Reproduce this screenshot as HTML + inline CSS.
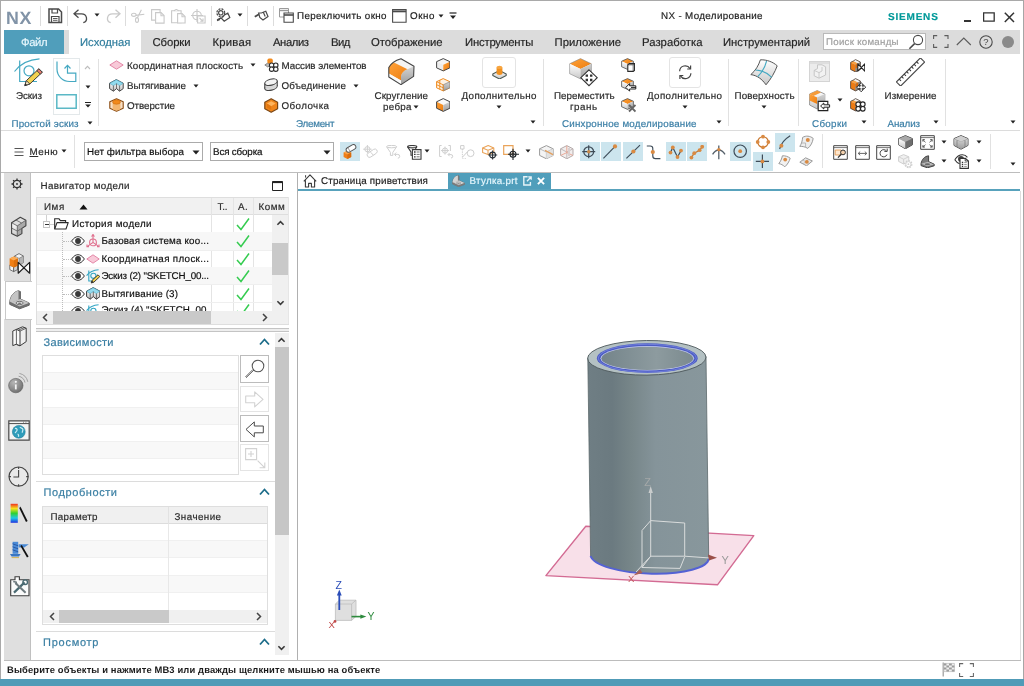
<!DOCTYPE html>
<html lang="ru"><head><meta charset="utf-8"><title>NX - Моделирование</title><style>
html,body{margin:0;padding:0;}
body{width:1024px;height:686px;overflow:hidden;background:#fff;position:relative;font-family:"Liberation Sans", sans-serif;}
#app{position:absolute;left:0;top:0;width:1024px;height:686px;will-change:transform;}
.a{position:absolute;display:block;}
.t{position:absolute;white-space:nowrap;line-height:16px;height:16px;transform-origin:0 50%;text-rendering:geometricPrecision;-webkit-text-stroke:0.18px currentColor;font-family:"Liberation Sans", sans-serif;}
</style></head><body>
<div id="app">
<div class="a" style="left:0px;top:0px;width:1024px;height:686px;background:#fff;"></div>
<div class="a" style="left:0px;top:0px;width:1024px;height:1px;background:#a9a9a9;"></div>
<div class="a" style="left:0px;top:0px;width:1px;height:686px;background:#a9a9a9;"></div>
<div class="a" style="left:1023px;top:0px;width:1px;height:686px;background:#a6a6a6;"></div>
<span class="t" style="letter-spacing:0.55px;left:6px;top:8.4px;font-size:17.8px;color:#8193a7;font-weight:700;line-height:20px;height:20px;-webkit-text-stroke:0;">NX</span>
<div class="a" style="left:40px;top:6px;width:1px;height:20px;background:#dcdcdc;"></div>
<div class="a" style="left:67px;top:6px;width:1px;height:20px;background:#dcdcdc;"></div>
<div class="a" style="left:125px;top:6px;width:1px;height:20px;background:#dcdcdc;"></div>
<div class="a" style="left:211px;top:6px;width:1px;height:20px;background:#dcdcdc;"></div>
<div class="a" style="left:247px;top:6px;width:1px;height:20px;background:#dcdcdc;"></div>
<div class="a" style="left:273px;top:6px;width:1px;height:20px;background:#dcdcdc;"></div>
<span class="t" style="letter-spacing:0.36px;left:297px;top:8.8px;font-size:9.8px;color:#1e1e1e;">Переключить окно</span>
<span class="t" style="letter-spacing:0.55px;left:410px;top:8.8px;font-size:9.8px;color:#1e1e1e;">Окно</span>
<svg class="a" style="left:438.0px;top:13.5px;" width="6" height="4" viewBox="0 0 6 4"><path d="M0.5 0.5h5l-2.5 3z" fill="#222"/></svg>
<span class="t" style="letter-spacing:0.35px;left:661px;top:8.8px;font-size:9.8px;color:#1e1e1e;">NX - Моделирование</span>
<span class="t" style="letter-spacing:0.8px;left:888px;top:10.3px;font-size:10px;color:#099;font-weight:700;">SIEMENS</span>
<div class="a" style="left:4px;top:30px;width:1016px;height:24px;background:#dcdcdc;"></div>
<div class="a" style="left:4px;top:30px;width:60px;height:24px;background:#509ebb;"></div>
<div class="a" style="left:68.5px;top:30px;width:72px;height:24px;background:#fff;"></div>
<span class="t" style="letter-spacing:-0.43px;left:21px;top:34.8px;font-size:11.3px;color:#e6f7fd;">Файл</span>
<span class="t" style="letter-spacing:-0.01px;left:80px;top:34.8px;font-size:11.3px;color:#2f7d9d;">Исходная</span>
<span class="t" style="letter-spacing:-0.09px;left:152.5px;top:34.8px;font-size:11.3px;color:#262626;">Сборки</span>
<span class="t" style="letter-spacing:0.21px;left:212.5px;top:34.8px;font-size:11.3px;color:#262626;">Кривая</span>
<span class="t" style="letter-spacing:-0.43px;left:273px;top:34.8px;font-size:11.3px;color:#262626;">Анализ</span>
<span class="t" style="letter-spacing:-0.5px;left:331px;top:34.8px;font-size:11.3px;color:#262626;">Вид</span>
<span class="t" style="letter-spacing:-0.03px;left:371px;top:34.8px;font-size:11.3px;color:#262626;">Отображение</span>
<span class="t" style="letter-spacing:-0.2px;left:465px;top:34.8px;font-size:11.3px;color:#262626;">Инструменты</span>
<span class="t" style="letter-spacing:0.03px;left:554.5px;top:34.8px;font-size:11.3px;color:#262626;">Приложение</span>
<span class="t" style="letter-spacing:0.03px;left:642px;top:34.8px;font-size:11.3px;color:#262626;">Разработка</span>
<span class="t" style="letter-spacing:-0.03px;left:723px;top:34.8px;font-size:11.3px;color:#262626;">Инструментарий</span>
<div class="a" style="left:823px;top:33px;width:103px;height:17px;background:#fff;border:1px solid #b9b9b9;box-sizing:border-box;"></div>
<span class="t" style="letter-spacing:0.27px;left:826px;top:34.8px;font-size:9.7px;color:#a0a0a0;">Поиск команды</span>
<div class="a" style="left:1002px;top:35.5px;width:12px;height:12px;background:#8a8a8a;border-radius:6px;"></div>
<div class="a" style="left:1px;top:130px;width:1019px;height:1px;background:#dcdcdc;"></div>
<div class="a" style="left:98px;top:59px;width:1px;height:67px;background:#e1e1e1;"></div>
<div class="a" style="left:543px;top:59px;width:1px;height:67px;background:#e1e1e1;"></div>
<div class="a" style="left:728px;top:59px;width:1px;height:67px;background:#e1e1e1;"></div>
<div class="a" style="left:798px;top:59px;width:1px;height:67px;background:#e1e1e1;"></div>
<div class="a" style="left:873px;top:59px;width:1px;height:67px;background:#e1e1e1;"></div>
<div class="a" style="left:945px;top:59px;width:1px;height:67px;background:#e1e1e1;"></div>
<span class="t" style="letter-spacing:-0.05px;left:16px;top:88.8px;font-size:9.8px;color:#2b2b2b;">Эскиз</span>
<div class="a" style="left:53px;top:58px;width:27px;height:57px;border:1px solid #e3e8ea;box-sizing:border-box;"></div>
<span class="t" style="letter-spacing:0.17px;left:11.5px;top:117.3px;font-size:9.8px;color:#3b7fa6;">Простой эскиз</span>
<svg class="a" style="left:86.5px;top:120.5px;" width="6" height="4" viewBox="0 0 6 4"><path d="M0.5 0.5h5l-2.5 3z" fill="#222"/></svg>
<svg class="a" style="left:84.5px;top:84.5px;" width="6" height="4" viewBox="0 0 6 4"><path d="M0.5 0.5h5l-2.5 3z" fill="#222"/></svg>
<svg class="a" style="left:84px;top:65px;" width="7" height="5" viewBox="0 0 7 5"><path d="M1 4l2.5-2.6 2.5 2.6" fill="none" stroke="#bdbdbd" stroke-width="1.1"/></svg>
<svg class="a" style="left:84.5px;top:102px;" width="6" height="6" viewBox="0 0 6 6"><path d="M0 0.5h6" stroke="#222" stroke-width="1"/><path d="M0.2 2.6h5.6l-2.8 3z" fill="#222"/></svg>
<span class="t" style="letter-spacing:0.15px;left:127px;top:58.8px;font-size:9.8px;color:#2b2b2b;">Координатная плоскость</span>
<svg class="a" style="left:249.5px;top:63.0px;" width="6" height="4" viewBox="0 0 6 4"><path d="M0.5 0.5h5l-2.5 3z" fill="#222"/></svg>
<span class="t" style="letter-spacing:-0.03px;left:127px;top:79.3px;font-size:9.8px;color:#2b2b2b;">Вытягивание</span>
<svg class="a" style="left:192.5px;top:84.0px;" width="6" height="4" viewBox="0 0 6 4"><path d="M0.5 0.5h5l-2.5 3z" fill="#222"/></svg>
<span class="t" style="letter-spacing:-0.05px;left:127px;top:99.3px;font-size:9.8px;color:#2b2b2b;">Отверстие</span>
<span class="t" style="letter-spacing:-0.03px;left:281.5px;top:58.8px;font-size:9.8px;color:#2b2b2b;">Массив элементов</span>
<span class="t" style="letter-spacing:0.18px;left:281.5px;top:79.3px;font-size:9.8px;color:#2b2b2b;">Объединение</span>
<svg class="a" style="left:353.0px;top:84.0px;" width="6" height="4" viewBox="0 0 6 4"><path d="M0.5 0.5h5l-2.5 3z" fill="#222"/></svg>
<span class="t" style="letter-spacing:0.42px;left:281.5px;top:99.3px;font-size:9.8px;color:#2b2b2b;">Оболочка</span>
<span class="t" style="letter-spacing:-0.24px;left:296px;top:117.3px;font-size:9.8px;color:#3b7fa6;">Элемент</span>
<span class="t" style="letter-spacing:0.12px;left:374.5px;top:88.8px;font-size:9.8px;color:#2b2b2b;">Скругление</span>
<span class="t" style="letter-spacing:0.3px;left:383px;top:100.3px;font-size:9.8px;color:#2b2b2b;">ребра</span>
<svg class="a" style="left:413.0px;top:105.0px;" width="6" height="4" viewBox="0 0 6 4"><path d="M0.5 0.5h5l-2.5 3z" fill="#222"/></svg>
<div class="a" style="left:482px;top:57px;width:34px;height:31px;border:1px solid #e4e4e4;box-sizing:border-box;border-radius:3px;"></div>
<span class="t" style="letter-spacing:0.37px;left:461.5px;top:88.8px;font-size:9.8px;color:#2b2b2b;">Дополнительно</span>
<svg class="a" style="left:496.0px;top:104.5px;" width="6" height="4" viewBox="0 0 6 4"><path d="M0.5 0.5h5l-2.5 3z" fill="#222"/></svg>
<svg class="a" style="left:530.0px;top:120.0px;" width="6" height="4" viewBox="0 0 6 4"><path d="M0.5 0.5h5l-2.5 3z" fill="#222"/></svg>
<span class="t" style="letter-spacing:0.05px;left:554px;top:88.8px;font-size:9.8px;color:#2b2b2b;">Переместить</span>
<span class="t" style="letter-spacing:0.55px;left:570px;top:100.3px;font-size:9.8px;color:#2b2b2b;">грань</span>
<div class="a" style="left:669px;top:57px;width:32px;height:31px;border:1px solid #e4e4e4;box-sizing:border-box;border-radius:3px;"></div>
<span class="t" style="letter-spacing:0.37px;left:647px;top:88.8px;font-size:9.8px;color:#2b2b2b;">Дополнительно</span>
<svg class="a" style="left:682.0px;top:104.5px;" width="6" height="4" viewBox="0 0 6 4"><path d="M0.5 0.5h5l-2.5 3z" fill="#222"/></svg>
<span class="t" style="letter-spacing:0.2px;left:562px;top:117.3px;font-size:9.8px;color:#3b7fa6;">Синхронное моделирование</span>
<svg class="a" style="left:716.0px;top:119.5px;" width="6" height="4" viewBox="0 0 6 4"><path d="M0.5 0.5h5l-2.5 3z" fill="#222"/></svg>
<span class="t" style="letter-spacing:0.14px;left:734.5px;top:88.8px;font-size:9.8px;color:#2b2b2b;">Поверхность</span>
<svg class="a" style="left:761.0px;top:104.5px;" width="6" height="4" viewBox="0 0 6 4"><path d="M0.5 0.5h5l-2.5 3z" fill="#222"/></svg>
<div class="a" style="left:809px;top:60.5px;width:21px;height:21px;background:#ececec;border:1px solid #d4d4d4;box-sizing:border-box;"></div>
<svg class="a" style="left:836.5px;top:98.0px;" width="6" height="4" viewBox="0 0 6 4"><path d="M0.5 0.5h5l-2.5 3z" fill="#222"/></svg>
<span class="t" style="letter-spacing:0.33px;left:812px;top:117.3px;font-size:9.8px;color:#3b7fa6;">Сборки</span>
<svg class="a" style="left:860.5px;top:120.0px;" width="6" height="4" viewBox="0 0 6 4"><path d="M0.5 0.5h5l-2.5 3z" fill="#222"/></svg>
<span class="t" style="letter-spacing:0.13px;left:884.5px;top:88.8px;font-size:9.8px;color:#2b2b2b;">Измерение</span>
<span class="t" style="letter-spacing:-0.12px;left:887.5px;top:117.3px;font-size:9.8px;color:#3b7fa6;">Анализ</span>
<svg class="a" style="left:933.0px;top:120.0px;" width="6" height="4" viewBox="0 0 6 4"><path d="M0.5 0.5h5l-2.5 3z" fill="#222"/></svg>
<svg class="a" style="left:1010.0px;top:120.0px;" width="6" height="4" viewBox="0 0 6 4"><path d="M0.5 0.5h5l-2.5 3z" fill="#222"/></svg>
<div class="a" style="left:1px;top:172px;width:1019px;height:1px;background:#bdbdbd;"></div>
<span class="t" style="letter-spacing:0.5px;left:29.5px;top:144.8px;font-size:9.8px;color:#2b2b2b;"><u>М</u>еню</span>
<svg class="a" style="left:60.5px;top:149.0px;" width="6" height="4" viewBox="0 0 6 4"><path d="M0.5 0.5h5l-2.5 3z" fill="#222"/></svg>
<svg class="a" style="left:14px;top:147px;" width="10" height="10" viewBox="0 0 10 10"><path d="M0.5 1.5h9M0.5 5h9M0.5 8.5h9" stroke="#555" stroke-width="1"/></svg>
<div class="a" style="left:74px;top:135px;width:1px;height:33px;background:#e1e1e1;"></div>
<div class="a" style="left:84px;top:142px;width:119px;height:19px;background:#fff;border:1px solid #ababab;box-sizing:border-box;"></div>
<span class="t" style="letter-spacing:0.1px;left:87px;top:144.8px;font-size:9.8px;color:#111;">Нет фильтра выбора</span>
<svg class="a" style="left:191.5px;top:149.5px;" width="8" height="5" viewBox="0 0 8 5"><path d="M0.5 0.5h7l-3.5 4z" fill="#222"/></svg>
<div class="a" style="left:210px;top:142px;width:124px;height:19px;background:#fff;border:1px solid #ababab;box-sizing:border-box;"></div>
<span class="t" style="letter-spacing:-0.15px;left:213px;top:144.8px;font-size:9.8px;color:#111;">Вся сборка</span>
<svg class="a" style="left:322.5px;top:149.5px;" width="8" height="5" viewBox="0 0 8 5"><path d="M0.5 0.5h7l-3.5 4z" fill="#222"/></svg>
<div class="a" style="left:340px;top:142px;width:20px;height:19px;background:#cce5ee;"></div>
<div class="a" style="left:580px;top:142px;width:19.5px;height:19px;background:#cce5ee;"></div>
<div class="a" style="left:601px;top:142px;width:19.5px;height:19px;background:#cce5ee;"></div>
<div class="a" style="left:623px;top:142px;width:19.5px;height:19px;background:#cce5ee;"></div>
<div class="a" style="left:666px;top:142px;width:20px;height:19px;background:#cce5ee;"></div>
<div class="a" style="left:687px;top:142px;width:20px;height:19px;background:#cce5ee;"></div>
<div class="a" style="left:730px;top:142px;width:21px;height:19px;background:#cce5ee;"></div>
<div class="a" style="left:753px;top:152px;width:20px;height:19px;background:#cce5ee;"></div>
<div class="a" style="left:775px;top:133px;width:20px;height:19px;background:#cce5ee;"></div>
<div class="a" style="left:822px;top:134px;width:1px;height:34px;background:#e1e1e1;"></div>
<div class="a" style="left:990px;top:134px;width:1px;height:35px;background:#e1e1e1;"></div>
<svg class="a" style="left:424.0px;top:148.5px;" width="6" height="4" viewBox="0 0 6 4"><path d="M0.5 0.5h5l-2.5 3z" fill="#222"/></svg>
<svg class="a" style="left:524.5px;top:148.5px;" width="6" height="4" viewBox="0 0 6 4"><path d="M0.5 0.5h5l-2.5 3z" fill="#222"/></svg>
<svg class="a" style="left:940.5px;top:139.5px;" width="6" height="4" viewBox="0 0 6 4"><path d="M0.5 0.5h5l-2.5 3z" fill="#222"/></svg>
<svg class="a" style="left:975.5px;top:139.5px;" width="6" height="4" viewBox="0 0 6 4"><path d="M0.5 0.5h5l-2.5 3z" fill="#222"/></svg>
<svg class="a" style="left:940.5px;top:158.5px;" width="6" height="4" viewBox="0 0 6 4"><path d="M0.5 0.5h5l-2.5 3z" fill="#222"/></svg>
<svg class="a" style="left:975.5px;top:158.5px;" width="6" height="4" viewBox="0 0 6 4"><path d="M0.5 0.5h5l-2.5 3z" fill="#222"/></svg>
<svg class="a" style="left:1010.0px;top:161.5px;" width="6" height="4" viewBox="0 0 6 4"><path d="M0.5 0.5h5l-2.5 3z" fill="#222"/></svg>
<div class="a" style="left:4px;top:173px;width:27px;height:487px;background:#dfdfdf;"></div>
<div class="a" style="left:4px;top:281px;width:28px;height:38px;background:#fff;"></div>
<div class="a" style="left:30px;top:173px;width:1px;height:487px;background:#c0c0c0;"></div>
<div class="a" style="left:30px;top:281px;width:2px;height:38px;background:#fff;"></div>
<span class="t" style="letter-spacing:0.35px;left:40.5px;top:178.8px;font-size:9.8px;color:#2b2b2b;">Навигатор модели</span>
<svg class="a" style="left:272px;top:181px;" width="11" height="10" viewBox="0 0 11 10"><path d="M0.5 0.5h10v9h-10z" fill="none" stroke="#222"/><path d="M0.5 1.3h10" stroke="#222" stroke-width="1.6"/></svg>
<div class="a" style="left:37px;top:198px;width:252px;height:17px;background:#f1f1f1;"></div>
<div class="a" style="left:37px;top:197px;width:252px;height:1px;background:#dedede;"></div>
<div class="a" style="left:37px;top:214px;width:252px;height:1px;background:#dedede;"></div>
<div class="a" style="left:36px;top:197px;width:1px;height:127px;background:#dedede;"></div>
<div class="a" style="left:288px;top:197px;width:1px;height:127px;background:#e6e6e6;"></div>
<div class="a" style="left:211px;top:198px;width:1px;height:113px;background:#e4e4e4;"></div>
<div class="a" style="left:233px;top:198px;width:1px;height:113px;background:#e4e4e4;"></div>
<div class="a" style="left:253px;top:198px;width:1px;height:113px;background:#e4e4e4;"></div>
<span class="t" style="letter-spacing:0.55px;left:44px;top:200.3px;font-size:9.8px;color:#2b2b2b;">Имя</span>
<svg class="a" style="left:79px;top:204px;" width="9" height="6" viewBox="0 0 9 6"><path d="M0.5 5.5l4-5 4 5z" fill="#111"/></svg>
<span class="t" style="letter-spacing:-0.17px;left:217.5px;top:200.3px;font-size:9.8px;color:#2b2b2b;">Т..</span>
<span class="t" style="letter-spacing:0.55px;left:238px;top:200.3px;font-size:9.8px;color:#2b2b2b;">А.</span>
<span class="t" style="letter-spacing:0.55px;left:258.5px;top:200.3px;font-size:9.8px;color:#2b2b2b;">Комм</span>
<div class="a" style="left:37px;top:232px;width:235px;height:1px;background:#efefef;"></div>
<div class="a" style="left:37px;top:232px;width:235px;height:17.5px;background:#f7f7f7;"></div>
<div class="a" style="left:37px;top:250px;width:235px;height:1px;background:#efefef;"></div>
<div class="a" style="left:37px;top:267px;width:235px;height:1px;background:#efefef;"></div>
<div class="a" style="left:37px;top:267px;width:235px;height:17.5px;background:#f7f7f7;"></div>
<div class="a" style="left:37px;top:284px;width:235px;height:1px;background:#efefef;"></div>
<div class="a" style="left:37px;top:302px;width:235px;height:1px;background:#efefef;"></div>
<span class="t" style="letter-spacing:0.37px;left:72px;top:217.2px;font-size:9.8px;color:#111;">История модели</span>
<svg class="a" style="left:236px;top:216.5px;" width="14" height="14" viewBox="0 0 14 14"><path d="M1 8l4 4.5 8-11" fill="none" stroke="#35cc50" stroke-width="1.5"/></svg>
<span class="t" style="letter-spacing:0.18px;left:101.5px;top:234.3px;font-size:9.8px;color:#111;">Базовая система коо...</span>
<svg class="a" style="left:236px;top:234px;" width="14" height="14" viewBox="0 0 14 14"><path d="M1 8l4 4.5 8-11" fill="none" stroke="#35cc50" stroke-width="1.5"/></svg>
<span class="t" style="letter-spacing:0.33px;left:101.5px;top:251.8px;font-size:9.8px;color:#111;">Координатная плоск...</span>
<svg class="a" style="left:236px;top:251.5px;" width="14" height="14" viewBox="0 0 14 14"><path d="M1 8l4 4.5 8-11" fill="none" stroke="#35cc50" stroke-width="1.5"/></svg>
<span class="t" style="letter-spacing:-0.17px;left:101.5px;top:269.3px;font-size:9.8px;color:#111;">Эскиз (2) "SKETCH_00...</span>
<svg class="a" style="left:236px;top:269px;" width="14" height="14" viewBox="0 0 14 14"><path d="M1 8l4 4.5 8-11" fill="none" stroke="#35cc50" stroke-width="1.5"/></svg>
<span class="t" style="letter-spacing:0.18px;left:101.5px;top:286.8px;font-size:9.8px;color:#111;">Вытягивание (3)</span>
<svg class="a" style="left:236px;top:286.5px;" width="14" height="14" viewBox="0 0 14 14"><path d="M1 8l4 4.5 8-11" fill="none" stroke="#35cc50" stroke-width="1.5"/></svg>
<div class="a" style="left:37px;top:302px;width:235px;height:9px;overflow:hidden;">
<span class="t" style="left:64.5px;top:0.5px;font-size:9.8px;color:#111;letter-spacing:0.1px;">Эскиз (4) "SKETCH_00...</span>
<svg class="a" style="left:199px;top:1px" width="14" height="14"><path d="M1 8l4 4.5 8-11" fill="none" stroke="#35cc50" stroke-width="1.5"/></svg>
</div>
<div class="a" style="left:272px;top:215px;width:16px;height:96px;background:#f0f0f0;"></div>
<div class="a" style="left:272px;top:243px;width:16px;height:32px;background:#c9c9c9;"></div>
<svg class="a" style="left:276px;top:220px;" width="9" height="6" viewBox="0 0 9 6"><path d="M1.4 4.8l3.1-3.1 3.1 3.1" fill="none" stroke="#3a3a3a" stroke-width="1.6"/></svg>
<svg class="a" style="left:276px;top:300px;" width="9" height="6" viewBox="0 0 9 6"><path d="M1.4 1.2l3.1 3.1 3.1-3.1" fill="none" stroke="#3a3a3a" stroke-width="1.6"/></svg>
<div class="a" style="left:37px;top:311px;width:235px;height:13px;background:#f0f0f0;"></div>
<div class="a" style="left:53px;top:311px;width:158px;height:13px;background:#c9c9c9;"></div>
<svg class="a" style="left:42px;top:313px;" width="6" height="9" viewBox="0 0 6 9"><path d="M5 1l-3.5 3.5 3.5 3.5" fill="none" stroke="#444" stroke-width="1.5"/></svg>
<svg class="a" style="left:262px;top:313px;" width="6" height="9" viewBox="0 0 6 9"><path d="M1 1l3.5 3.5-3.5 3.5" fill="none" stroke="#444" stroke-width="1.5"/></svg>
<div class="a" style="left:272px;top:311px;width:16px;height:13px;background:#f0f0f0;"></div>
<div class="a" style="left:36px;top:324px;width:253px;height:1px;background:#dedede;"></div>
<div class="a" style="left:36px;top:328px;width:253px;height:1px;background:#c4c4c4;"></div>
<div class="a" style="left:36px;top:331px;width:253px;height:1px;background:#c4c4c4;"></div>
<div class="a" style="left:36px;top:329px;width:253px;height:2px;background:#eeeeee;"></div>
<span class="t" style="letter-spacing:0.32px;left:43.5px;top:335.0px;font-size:11px;color:#3a7fa3;">Зависимости</span>
<svg class="a" style="left:259px;top:338px;" width="11" height="8" viewBox="0 0 11 8"><path d="M1 6.5l4.5-5 4.5 5" fill="none" stroke="#1c6c8a" stroke-width="1.8"/></svg>
<div class="a" style="left:42px;top:355px;width:197px;height:120px;background:#fff;border:1px solid #dedede;box-sizing:border-box;"></div>
<div class="a" style="left:43px;top:373px;width:195px;height:17px;background:#f8f8f8;"></div>
<div class="a" style="left:43px;top:372px;width:195px;height:1px;background:#f0f0f0;"></div>
<div class="a" style="left:43px;top:389px;width:195px;height:1px;background:#f0f0f0;"></div>
<div class="a" style="left:43px;top:408px;width:195px;height:17px;background:#f8f8f8;"></div>
<div class="a" style="left:43px;top:407px;width:195px;height:1px;background:#f0f0f0;"></div>
<div class="a" style="left:43px;top:424px;width:195px;height:1px;background:#f0f0f0;"></div>
<div class="a" style="left:43px;top:442px;width:195px;height:17px;background:#f8f8f8;"></div>
<div class="a" style="left:43px;top:441px;width:195px;height:1px;background:#f0f0f0;"></div>
<div class="a" style="left:43px;top:458px;width:195px;height:1px;background:#f0f0f0;"></div>
<div class="a" style="left:240px;top:355px;width:29px;height:28px;background:#fff;border:1px solid #bcbcbc;box-sizing:border-box;"></div>
<div class="a" style="left:240px;top:386px;width:29px;height:26px;background:#fff;border:1px solid #e4e4e4;box-sizing:border-box;"></div>
<div class="a" style="left:240px;top:415px;width:29px;height:27px;background:#fff;border:1px solid #bcbcbc;box-sizing:border-box;"></div>
<div class="a" style="left:240px;top:444px;width:29px;height:27px;background:#fff;border:1px solid #e4e4e4;box-sizing:border-box;"></div>
<div class="a" style="left:275px;top:333px;width:14px;height:322px;background:#f0f0f0;"></div>
<div class="a" style="left:275px;top:347px;width:14px;height:188px;background:#c6c6c6;"></div>
<svg class="a" style="left:277px;top:337px;" width="9" height="6" viewBox="0 0 9 6"><path d="M1.4 4.8l3.1-3.1 3.1 3.1" fill="none" stroke="#3a3a3a" stroke-width="1.6"/></svg>
<svg class="a" style="left:277px;top:645px;" width="9" height="6" viewBox="0 0 9 6"><path d="M1.4 1.2l3.1 3.1 3.1-3.1" fill="none" stroke="#3a3a3a" stroke-width="1.6"/></svg>
<div class="a" style="left:36px;top:481px;width:239px;height:1px;background:#dcdcdc;"></div>
<span class="t" style="letter-spacing:0.59px;left:43.5px;top:485.0px;font-size:11px;color:#3a7fa3;">Подробности</span>
<svg class="a" style="left:259px;top:488px;" width="11" height="8" viewBox="0 0 11 8"><path d="M1 6.5l4.5-5 4.5 5" fill="none" stroke="#1c6c8a" stroke-width="1.8"/></svg>
<div class="a" style="left:42px;top:506px;width:226px;height:119px;background:#fff;border:1px solid #dedede;box-sizing:border-box;"></div>
<div class="a" style="left:43px;top:507px;width:224px;height:17px;background:#f0f0f0;"></div>
<div class="a" style="left:43px;top:523px;width:224px;height:1px;background:#dcdcdc;"></div>
<div class="a" style="left:168px;top:507px;width:1px;height:103px;background:#e2e2e2;"></div>
<span class="t" style="letter-spacing:0.26px;left:50.5px;top:509.8px;font-size:9.8px;color:#2b2b2b;">Параметр</span>
<span class="t" style="letter-spacing:0.44px;left:174.5px;top:509.8px;font-size:9.8px;color:#2b2b2b;">Значение</span>
<div class="a" style="left:43px;top:540px;width:224px;height:1px;background:#f0f0f0;"></div>
<div class="a" style="left:43px;top:541px;width:224px;height:17px;background:#f8f8f8;"></div>
<div class="a" style="left:43px;top:557px;width:224px;height:1px;background:#f0f0f0;"></div>
<div class="a" style="left:43px;top:575px;width:224px;height:1px;background:#f0f0f0;"></div>
<div class="a" style="left:43px;top:576px;width:224px;height:17px;background:#f8f8f8;"></div>
<div class="a" style="left:43px;top:592px;width:224px;height:1px;background:#f0f0f0;"></div>
<div class="a" style="left:168px;top:524px;width:1px;height:86px;background:#e8e8e8;"></div>
<div class="a" style="left:43px;top:610px;width:224px;height:13px;background:#f0f0f0;"></div>
<div class="a" style="left:59px;top:610px;width:110px;height:13px;background:#c9c9c9;"></div>
<svg class="a" style="left:49px;top:612px;" width="6" height="9" viewBox="0 0 6 9"><path d="M5 1l-3.5 3.5 3.5 3.5" fill="none" stroke="#444" stroke-width="1.5"/></svg>
<svg class="a" style="left:256px;top:612px;" width="6" height="9" viewBox="0 0 6 9"><path d="M1 1l3.5 3.5-3.5 3.5" fill="none" stroke="#444" stroke-width="1.5"/></svg>
<div class="a" style="left:36px;top:631px;width:239px;height:1px;background:#dcdcdc;"></div>
<span class="t" style="letter-spacing:0.75px;left:43px;top:635.0px;font-size:11px;color:#3a7fa3;">Просмотр</span>
<svg class="a" style="left:259px;top:638px;" width="11" height="8" viewBox="0 0 11 8"><path d="M1 6.5l4.5-5 4.5 5" fill="none" stroke="#1c6c8a" stroke-width="1.8"/></svg>
<div class="a" style="left:297px;top:173px;width:1px;height:487px;background:#b0b0b0;"></div>
<div class="a" style="left:290px;top:173px;width:7px;height:487px;background:#fff;"></div>
<div class="a" style="left:447.5px;top:173px;width:103px;height:18px;background:#509ebb;"></div>
<div class="a" style="left:298px;top:189px;width:722px;height:2px;background:#58a2bc;"></div>
<span class="t" style="letter-spacing:0.19px;left:321px;top:174.0px;font-size:9.8px;color:#1e1e1e;">Страница приветствия</span>
<span class="t" style="letter-spacing:0.3px;left:469.5px;top:174.0px;font-size:9.8px;color:#e6f7fd;">Втулка.prt</span>
<div class="a" style="left:1020px;top:191px;width:1px;height:469px;background:#dedede;"></div>
<div class="a" style="left:4px;top:660px;width:1017px;height:1px;background:#bcbcbc;"></div>
<span class="t" style="letter-spacing:0.13px;left:7px;top:661.9px;font-size:9.4px;color:#1a1a1a;font-weight:700;-webkit-text-stroke:0;">Выберите объекты и нажмите MB3 или дважды щелкните мышью на объекте</span>
<div class="a" style="left:0px;top:679px;width:1024px;height:7px;background:#509bb7;"></div>
<svg class="a" style="left:47.5px;top:8px;" width="15" height="16" viewBox="0 0 15 16"><path d="M1 1h9.5l3 3v10.5h-12.5z" fill="#fff" stroke="#4a4a4a" stroke-width="1.5"/><path d="M4 1v4h5.5v-4" fill="none" stroke="#4a4a4a" stroke-width="1.2"/><path d="M3.5 14v-5.5h7.5v5.5" fill="none" stroke="#4a4a4a" stroke-width="1.2"/><path d="M5 10.5h4.5M5 12.3h4.5" stroke="#4a4a4a" stroke-width="0.9"/></svg>
<svg class="a" style="left:72.5px;top:8.5px;" width="15" height="15" viewBox="0 0 15 15"><path d="M5.5 0.8l-4.5 4 4.5 4M1 4.8h7.5a5 4.6 0 0 1 1.8 8.9" fill="none" stroke="#4a4a4a" stroke-width="1.3"/></svg>
<svg class="a" style="left:93.5px;top:13.0px;" width="6" height="4" viewBox="0 0 6 4"><path d="M0.5 0.5h5l-2.5 3z" fill="#222"/></svg>
<svg class="a" style="left:105.5px;top:8.5px;" width="15" height="15" viewBox="0 0 15 15"><path d="M9.5 0.8l4.5 4-4.5 4M14 4.8h-7.5a5 4.6 0 0 0 -1.8 8.9" fill="none" stroke="#c9c9c9" stroke-width="1.3"/></svg>
<svg class="a" style="left:131px;top:9px;" width="14" height="14" viewBox="0 0 14 14"><g fill="none" stroke="#c9c9c9" stroke-width="1.1"><ellipse cx="2.8" cy="5.8" rx="2.3" ry="1.6"/><ellipse cx="6" cy="11" rx="1.5" ry="2.4"/><path d="M4.8 6.4l8.5-1.2M6.4 8.8l4-8"/></g></svg>
<svg class="a" style="left:151px;top:8.5px;" width="14" height="15" viewBox="0 0 14 15"><g fill="#fff" stroke="#c9c9c9" stroke-width="1.1"><path d="M0.6 0.6h8.5v10.5h-8.5z"/><path d="M4.6 3.6h5.5l3 3v7.5h-8.5z"/><path d="M10 3.8v3h3" fill="none"/></g></svg>
<svg class="a" style="left:170.5px;top:8.5px;" width="15" height="15" viewBox="0 0 15 15"><g fill="#fff" stroke="#c9c9c9" stroke-width="1.1"><path d="M0.6 1.8h9.5v12h-9.5z"/><path d="M3 1.8l2.3-1.4 2.3 1.4" /><path d="M6.6 4.6h4.5l3 3v6.4h-7.5z"/><path d="M11 4.8v3h3" fill="none"/></g></svg>
<svg class="a" style="left:191px;top:8.5px;" width="15" height="15" viewBox="0 0 15 15"><g fill="none" stroke="#c9c9c9" stroke-width="1.1"><circle cx="6" cy="6.5" r="4.3"/><path d="M6 0v13M0 6.5h12"/><path d="M6.6 7h7.5v7h-7.5z" fill="#fff"/><path d="M8.5 9l3.5 3.3M12 9.6v2.7h-2.7"/></g></svg>
<svg class="a" style="left:216px;top:8px;" width="15" height="15" viewBox="0 0 15 15"><g fill="none" stroke="#4a4a4a" stroke-width="1.2"><circle cx="4.8" cy="4.8" r="2.2"/><circle cx="4.8" cy="4.8" r="3.9" stroke-dasharray="2 1.1"/><path d="M1.2 11.8l3.8-2 3.2 3.4 5.6-3.6-2-4.4-3.4 1.8-2.2 2.6"/><path d="M1 12.5l3-1.2" stroke-width="1.6"/></g></svg>
<svg class="a" style="left:237.0px;top:13.0px;" width="6" height="4" viewBox="0 0 6 4"><path d="M0.5 0.5h5l-2.5 3z" fill="#222"/></svg>
<svg class="a" style="left:254px;top:9.5px;" width="15" height="11" viewBox="0 0 15 11"><g fill="none" stroke="#4a4a4a" stroke-width="1.2"><path d="M0.8 6.8l4.2-2.6" stroke-width="1.8"/><path d="M4.6 3l1.2 4.4 3.2 2.6 5-3.4-2.2-5.4-4.4 1.8z"/><path d="M9.2 2l2 4.6" /></g></svg>
<svg class="a" style="left:279px;top:8px;" width="15" height="15" viewBox="0 0 15 15"><g fill="#fff" stroke="#9a9a9a" stroke-width="1"><path d="M0.5 0.5h9v8.5h-9z"/><path d="M0.5 2.5h9" stroke-width="1.4"/></g><g fill="#fff" stroke="#4a4a4a" stroke-width="1.1"><path d="M5 5h9.3v9.3h-9.3z"/><path d="M5 7h9.3" stroke-width="1.6"/></g></svg>
<svg class="a" style="left:392px;top:8.5px;" width="15" height="14" viewBox="0 0 15 14"><g fill="#fff" stroke="#4a4a4a" stroke-width="1.1"><path d="M0.6 0.6h13.5v12.6h-13.5z"/><path d="M0.6 2.4h13.5" stroke-width="1.8"/></g></svg>
<svg class="a" style="left:448.5px;top:12px;" width="8" height="8" viewBox="0 0 8 8"><path d="M0.5 1h7" stroke="#222" stroke-width="1.2"/><path d="M1 3.6h6l-3 3.4z" fill="#222"/></svg>
<div class="a" style="left:964px;top:20px;width:7px;height:2px;background:#333;"></div>
<svg class="a" style="left:983px;top:12px;" width="12" height="10" viewBox="0 0 12 10"><path d="M0.6 0.8h10.6v8.4h-10.6z" fill="none" stroke="#333" stroke-width="1.3"/></svg>
<svg class="a" style="left:1004px;top:11.5px;" width="11" height="11" viewBox="0 0 11 11"><path d="M0.8 0.8l9.2 9.2M10 0.8l-9.2 9.2" stroke="#333" stroke-width="1.5"/></svg>
<svg class="a" style="left:907.5px;top:34px;" width="16" height="16" viewBox="0 0 16 16"><circle cx="10" cy="6" r="4.6" fill="none" stroke="#4a4a4a" stroke-width="1.1"/><path d="M6.6 9.6l-5.2 5.2" stroke="#4a4a4a" stroke-width="1.6"/></svg>
<svg class="a" style="left:933px;top:35px;" width="16" height="13" viewBox="0 0 16 13"><path d="M0.6 4v-3.4h3.6M11.4 0.6h3.6v3.4M15 9v3.4h-3.6M4.2 12.4h-3.6v-3.4" fill="none" stroke="#5c5c5c" stroke-width="1.1"/></svg>
<svg class="a" style="left:955.5px;top:37px;" width="16" height="9" viewBox="0 0 16 9"><path d="M0.8 8l7-7 7 7" fill="none" stroke="#5c5c5c" stroke-width="1.1"/></svg>
<svg class="a" style="left:978.5px;top:34.5px;" width="14" height="14" viewBox="0 0 14 14"><circle cx="7" cy="7" r="6.2" fill="none" stroke="#4a4a4a" stroke-width="1.1"/><text x="7" y="10.3" font-size="9.5" font-family="Liberation Sans, sans-serif" text-anchor="middle" fill="#4a4a4a">?</text></svg>
<svg class="a" width="0" height="0" style="left:0;top:0"><defs>
<linearGradient id="gO" x1="0" y1="0" x2="1" y2="1"><stop offset="0" stop-color="#ffa23a"/><stop offset="1" stop-color="#ec7d10"/></linearGradient>
<linearGradient id="gG" x1="0" y1="0" x2="0" y2="1"><stop offset="0" stop-color="#d4d4d4"/><stop offset="1" stop-color="#9c9c9c"/></linearGradient>
<linearGradient id="gW" x1="0" y1="0" x2="0" y2="1"><stop offset="0" stop-color="#ffffff"/><stop offset="1" stop-color="#c8c8c8"/></linearGradient>
<linearGradient id="gC" x1="0" y1="0" x2="1" y2="0"><stop offset="0" stop-color="#6f7e84"/><stop offset="0.2" stop-color="#6b7a80"/><stop offset="0.36" stop-color="#778689"/><stop offset="0.56" stop-color="#85949a"/><stop offset="1" stop-color="#88979c"/></linearGradient>
</defs></svg>
<svg class="a" style="left:14px;top:57.5px;" width="29" height="29" viewBox="0 0 29 29"><g fill="none" stroke="#45a9c2" stroke-width="1.2"><path d="M0.5 13.5C6 6 14 1.5 25.5 0.8"/><path d="M5.7 2.5V23.5H23"/><circle cx="15" cy="12.8" r="5"/></g>
<path d="M10.8 27.6l1.6-5 12.5-11.8 3.4 3.4-12.5 11.8z" fill="#f3d250" stroke="#3a3a3a" stroke-width="1"/>
<path d="M24.9 10.8l-2 1.9 3.4 3.4 2-1.9z" fill="#e87e72" stroke="#3a3a3a" stroke-width="0.9"/>
<path d="M10.8 27.6l1.6-5 3.4 3.4z" fill="#f6e6c0" stroke="#3a3a3a" stroke-width="0.9"/><path d="M10.8 27.6l0.7-2.2 1.5 1.5z" fill="#222"/></svg>
<svg class="a" style="left:55.5px;top:61px;" width="21" height="22" viewBox="0 0 21 22"><g fill="none" stroke="#45a9c2" stroke-width="1.2"><path d="M1 0.5V8a12.5 12.5 0 0 0 12.5 12.5H19.8V12.2H11.5V4.5"/><path d="M8.5 7.5l3-3.2 3 3.2"/></g></svg>
<svg class="a" style="left:55.5px;top:93.5px;" width="21" height="15" viewBox="0 0 21 15"><path d="M0.8 0.8h19.4v13.4h-19.4z" fill="#fbfeff" stroke="#5ab8c6" stroke-width="1.5"/></svg>
<svg class="a" style="left:109px;top:60px;" width="15" height="10" viewBox="0 0 15 10"><path d="M0.8 5L7.5 0.8 14.2 5 7.5 9.2z" fill="#f8c9d8" stroke="#e389a8" stroke-width="1"/></svg>
<svg class="a" style="left:109px;top:78.5px;" width="15" height="13" viewBox="0 0 15 13"><path d="M7.3 0.6L14.2 4.2V9.6L10.6 12.2L7.5 9.6L4.4 12.2L0.6 9.6V4.2z" fill="url(#gW)" stroke="#454545" stroke-width="1" stroke-linejoin="round"/>
<path d="M7.3 0.8L14 4.3L10.6 6.6L7.5 4.6L4.4 6.6L0.8 4.3z" fill="#93dbee" stroke="#4aa8c4" stroke-width="0.6"/>
<path d="M4.4 6.6V12M10.6 6.6V12M7.5 4.6V9.6" stroke="#454545" stroke-width="0.7"/></svg>
<svg class="a" style="left:109px;top:98px;" width="15" height="14" viewBox="0 0 15 14"><path d="M7.5 0.7L14.2 3.8V10.2L7.5 13.3L0.8 10.2V3.8z" fill="#f8e0c6" stroke="#8a4b12" stroke-width="1.1" stroke-linejoin="round"/>
<path d="M3.6 4v6.6a3.9 1.8 0 0 0 7.8 0V4z" fill="#f3b56e"/>
<ellipse cx="7.5" cy="4" rx="3.9" ry="2.2" fill="#f28a1c" stroke="#c96a0c" stroke-width="0.6"/></svg>
<svg class="a" style="left:264px;top:58px;" width="15" height="14" viewBox="0 0 15 14"><path d="M0.8 7l3-2 3 2-3 2z" fill="#bbb" stroke="#666" stroke-width="0.7"/>
<rect x="3.4" y="0.6" width="5.4" height="5" rx="1.6" fill="#f28a1c"/>
<g fill="#fff" stroke="#2c2c2c" stroke-width="1.1"><circle cx="7.6" cy="7.2" r="2.2"/><circle cx="11.8" cy="7.2" r="2.2"/><circle cx="7.6" cy="11.2" r="2.2"/><circle cx="11.8" cy="11.2" r="2.2"/></g></svg>
<svg class="a" style="left:264px;top:78px;" width="14" height="13.5" viewBox="0 0 14 13.5"><ellipse cx="7" cy="9.2" rx="6.4" ry="3" transform="rotate(-15 7 9.2)" fill="#d9d9d9" stroke="#454545" stroke-width="1.1"/>
<path d="M0.77 5.5L0.77 10.5L13.23 7.9V2.9z" fill="url(#gW)"/><path d="M0.77 5.5V10.5M13.23 2.9V7.9" stroke="#454545" stroke-width="1.1"/>
<ellipse cx="7" cy="4.2" rx="6.4" ry="3" transform="rotate(-15 7 4.2)" fill="#f3f3f3" stroke="#454545" stroke-width="1.1"/></svg>
<svg class="a" style="left:264px;top:97.5px;" width="14.5" height="15" viewBox="0 0 14.5 15"><path d="M7.2 0.8L13.6 4.2V10.8L7.2 14.2L0.8 10.8V4.2z" fill="#f0851a" stroke="#7a4716" stroke-width="1.2" stroke-linejoin="round"/>
<path d="M7.2 3.2L11.6 5.6L7.2 8.2L2.8 5.6z" fill="#ffb45c"/><path d="M2.8 5.6L7.2 8.2V12L2.8 9.6z" fill="#e27710"/></svg>
<svg class="a" style="left:387.5px;top:57.5px;" width="27" height="27.5" viewBox="0 0 27 27.5"><path d="M13 0.8L26 8.2L25.6 18.4L13 26.6L0.8 19V9.6C3 5.2 7.6 2.4 13 0.8z" fill="#f2f2f2"/>
<path d="M13 0.8L26 8.2L19.5 11.2L6 4.6z" fill="#f4f4f4"/>
<path d="M19.5 11.2L26 8.2L25.6 18.4L13 26.6V19.5C13 15.5 15.5 12.5 19.5 11.2z" fill="url(#gG)"/>
<path d="M6 4.6L19.5 11.2C15.5 12.5 13 15.5 13 19.5V22.6L0.8 15.6V9.6C1.6 7 3.6 5.4 6 4.6z" fill="url(#gO)"/>
<path d="M0.8 15.6L13 22.6V26.6L0.8 19z" fill="#fafafa"/>
<path d="M13 0.8L26 8.2L25.6 18.4L13 26.6L0.8 19V9.6C3 5.2 7.6 2.4 13 0.8z" fill="none" stroke="#454545" stroke-width="1.1" stroke-linejoin="round"/></svg>
<svg class="a" style="left:435.5px;top:58px;" width="14.5" height="13.5" viewBox="0 0 14.5 13.5"><path d="M7.25 0.6L13.9 3.6450000000000005L7.25 6.690000000000001L0.6 3.6450000000000005z" fill="#f4f4f4"/><path d="M0.6 3.6450000000000005L7.25 6.690000000000001V12.9L0.6 9.855z" fill="#ececec"/><path d="M13.9 3.6450000000000005L7.25 6.690000000000001V12.9L13.9 9.855z" fill="url(#gO)"/><path d="M7.25 0.6L13.9 3.6450000000000005V9.855L7.25 12.9L0.6 9.855V3.6450000000000005z" fill="none" stroke="#454545" stroke-width="1.0" stroke-linejoin="round"/></svg>
<svg class="a" style="left:435.5px;top:78px;" width="14.5" height="13.5" viewBox="0 0 14.5 13.5"><path d="M7.2 0.6L13.9 3.7V9.8L7.2 12.9L0.6 9.8V3.7z" fill="#fdf1e2" stroke="#ef8a1e" stroke-width="1"/>
<path d="M7.2 6.8L13.9 3.7V9.8L7.2 12.9z" fill="url(#gG)" stroke="#777" stroke-width="0.6"/>
<path d="M0.6 3.7L7.2 6.8V12.9M0.6 6.7L7.2 9.8M3.8 2.2V11.4" fill="none" stroke="#ef8a1e" stroke-width="0.9"/></svg>
<svg class="a" style="left:435.5px;top:97.8px;" width="14.5" height="14" viewBox="0 0 14.5 14"><path d="M7.25 0.6L13.9 3.7800000000000002L7.25 6.960000000000001L0.6 3.7800000000000002z" fill="#f8f8f8"/><path d="M0.6 3.7800000000000002L7.25 6.960000000000001V13.4L0.6 10.219999999999999z" fill="url(#gO)"/><path d="M13.9 3.7800000000000002L7.25 6.960000000000001V13.4L13.9 10.219999999999999z" fill="url(#gG)"/><path d="M7.25 0.6L13.9 3.7800000000000002V10.219999999999999L7.25 13.4L0.6 10.219999999999999V3.7800000000000002z" fill="none" stroke="#454545" stroke-width="1.0" stroke-linejoin="round"/></svg>
<svg class="a" style="left:491.5px;top:64.5px;" width="15" height="14.5" viewBox="0 0 15 14.5"><path d="M7.5 5.6L14.2 9V10.6L7.5 14L0.8 10.6V9z" fill="url(#gW)" stroke="#4d5a55" stroke-width="1.1" stroke-linejoin="round"/>
<path d="M4.6 2.4V8.6a2.9 1.4 0 0 0 5.8 0V2.4z" fill="#f0901f"/><ellipse cx="7.5" cy="2.4" rx="2.9" ry="1.7" fill="#f7a540"/></svg>
<svg class="a" style="left:569px;top:58px;" width="23" height="21.5" viewBox="0 0 23 21.5"><path d="M11.5 0.6L22.4 5.805000000000001L11.5 11.010000000000002L0.6 5.805000000000001z" fill="url(#gO)"/><path d="M0.6 5.805000000000001L11.5 11.010000000000002V20.9L0.6 15.695z" fill="url(#gW)"/><path d="M22.4 5.805000000000001L11.5 11.010000000000002V20.9L22.4 15.695z" fill="url(#gG)"/><path d="M11.5 0.6L22.4 5.805000000000001V15.695L11.5 20.9L0.6 15.695V5.805000000000001z" fill="none" stroke="#8a8a8a" stroke-width="0.6" stroke-linejoin="round"/></svg>
<svg class="a" style="left:579.5px;top:69px;" width="18" height="17.5" viewBox="0 0 18 17.5"><path d="M9 0.8L17.2 8.7L9 16.7L0.8 8.7z" fill="#fff" stroke="#333" stroke-width="1.1"/>
<path d="M9 3.2V14.2M3.4 8.7H14.6" stroke="#fff" stroke-width="3.4"/>
<path d="M5.6 5.4h2.4v2.4h-2.4zM10 5.4h2.4v2.4H10zM5.6 9.8h2.4v2.4h-2.4zM10 9.8h2.4v2.4H10z" fill="#333"/></svg>
<svg class="a" style="left:620.5px;top:58px;" width="13" height="12" viewBox="0 0 13 12"><path d="M6.5 0.6L12.4 3.24L6.5 5.880000000000001L0.6 3.24z" fill="url(#gO)"/><path d="M0.6 3.24L6.5 5.880000000000001V11.4L0.6 8.76z" fill="url(#gW)"/><path d="M12.4 3.24L6.5 5.880000000000001V11.4L12.4 8.76z" fill="url(#gG)"/><path d="M6.5 0.6L12.4 3.24V8.76L6.5 11.4L0.6 8.76V3.24z" fill="none" stroke="#4f4f4f" stroke-width="0.8" stroke-linejoin="round"/></svg>
<svg class="a" style="left:627px;top:62.5px;" width="8.4" height="9" viewBox="0 0 8.4 9"><path d="M0.8 1.8L2.2 0.6H7.6V7.4L6.2 8.4H0.8z" fill="#fff" stroke="#2a2a2a" stroke-width="1.1"/><path d="M0.8 1.8H6.2V8.4M6.2 1.8L7.6 0.6" fill="none" stroke="#2a2a2a" stroke-width="0.7"/></svg>
<svg class="a" style="left:620.5px;top:78px;" width="13" height="12" viewBox="0 0 13 12"><path d="M6.5 0.6L12.4 3.24L6.5 5.880000000000001L0.6 3.24z" fill="url(#gO)"/><path d="M0.6 3.24L6.5 5.880000000000001V11.4L0.6 8.76z" fill="url(#gW)"/><path d="M12.4 3.24L6.5 5.880000000000001V11.4L12.4 8.76z" fill="url(#gG)"/><path d="M6.5 0.6L12.4 3.24V8.76L6.5 11.4L0.6 8.76V3.24z" fill="none" stroke="#4f4f4f" stroke-width="0.8" stroke-linejoin="round"/></svg>
<svg class="a" style="left:624.5px;top:83px;" width="12" height="9" viewBox="0 0 12 9"><path d="M4.6 0.6L0.8 4.4L4.6 8.2V6H10.8V2.8H4.6z" fill="#fff" stroke="#222" stroke-width="1"/><path d="M6 4.4h5" stroke="#222" stroke-width="1"/></svg>
<svg class="a" style="left:620.5px;top:98px;" width="13" height="12" viewBox="0 0 13 12"><path d="M6.5 0.6L12.4 3.24L6.5 5.880000000000001L0.6 3.24z" fill="url(#gO)"/><path d="M0.6 3.24L6.5 5.880000000000001V11.4L0.6 8.76z" fill="url(#gW)"/><path d="M12.4 3.24L6.5 5.880000000000001V11.4L12.4 8.76z" fill="url(#gG)"/><path d="M6.5 0.6L12.4 3.24V8.76L6.5 11.4L0.6 8.76V3.24z" fill="none" stroke="#4f4f4f" stroke-width="0.8" stroke-linejoin="round"/></svg>
<svg class="a" style="left:627.5px;top:104px;" width="8.5" height="8.5" viewBox="0 0 8.5 8.5"><path d="M1 1l6.5 6.5M7.5 1L1 7.5" stroke="#666" stroke-width="1.9"/></svg>
<svg class="a" style="left:677.5px;top:65px;" width="14.5" height="14.5" viewBox="0 0 14.5 14.5"><g fill="none" stroke="#454545" stroke-width="1.2"><path d="M1.6 6.2A5.6 5.6 0 0 1 12 3.6"/><path d="M12.9 8.3A5.6 5.6 0 0 1 2.5 10.9"/><path d="M12.6 0.6V4H9.2M1.9 13.9V10.5H5.3"/></g></svg>
<svg class="a" style="left:749.5px;top:58.5px;" width="28" height="27" viewBox="0 0 28 27"><path d="M10.4 0.8C17 0.6 23 3 27.2 6.8C25 13 21 20 16 25.8C12 20 7 16.4 0.8 15.6C5.6 11.6 8.6 6.4 10.4 0.8z" fill="url(#gW)" stroke="#555" stroke-width="1" stroke-linejoin="round"/>
<path d="M5.6 11C12 11.4 17.5 14 21.8 18.4M16.6 2C15 8.4 12 13.6 7.8 17.6" fill="none" stroke="#45a9c2" stroke-width="1.1"/></svg>
<svg class="a" style="left:812px;top:63.5px;" width="15" height="15" viewBox="0 0 15 15"><path d="M5.5 0.8L10 0.8L13.6 2.8V11L7 14.2L2.2 11.8V6.4L5.5 4.6z" fill="#f2f2f2" stroke="#c6c6c6" stroke-width="1"/><path d="M2.2 6.4L7 8.6L10 7V3M7 8.6V14" fill="none" stroke="#c6c6c6" stroke-width="0.9"/></svg>
<div class="a" style="left:810px;top:61.5px;width:19px;height:2px;background:#dedede;"></div>
<svg class="a" style="left:809px;top:90px;" width="21.5" height="21.5" viewBox="0 0 21.5 21.5"><path d="M8.2 0.6L15.8 4V15L8.2 19L0.6 15V4z" fill="url(#gW)" stroke="#777" stroke-width="0.7"/>
<path d="M0.6 4L8.2 7.6V14L0.6 10.6z" fill="url(#gO)"/><path d="M0.6 4L8.2 0.6L12 2.4L4.4 6z" fill="#f59a38"/>
<path d="M8.2 7.6L15.8 4V15L8.2 19z" fill="url(#gG)"/>
<path d="M9.2 11.4h9.6v9.2H9.2z" fill="#fff" stroke="#222" stroke-width="1.1"/>
<path d="M14.8 13L11.6 16L14.8 19V17.2H20.6V14.8H14.8z" fill="#fff" stroke="#222" stroke-width="1"/></svg>
<svg class="a" style="left:850px;top:58.5px;" width="11" height="13.5" viewBox="0 0 11 13.5"><path d="M5.5 0.6L10.4 3V10.4L5.5 12.9L0.6 10.4V3z" fill="url(#gG)"/>
<path d="M0.6 3.4L5.5 5.8V12.9L0.6 10.4z" fill="#ee7c14"/><path d="M0.6 3.4L3.4 2L8.2 4.4L5.5 5.8z" fill="#f9a040"/><path d="M3.4 2L5.5 0.6L10.4 3L8.2 4.4z" fill="#f2f2f2"/><path d="M5.5 5.8L10.4 3V10.4L5.5 12.9z" fill="#8a8a8a"/><path d="M5.5 5.8L8.2 4.4V8L5.5 9.4z" fill="#d96a0a"/>
<path d="M5.5 0.6L10.4 3V10.4L5.5 12.9L0.6 10.4V3.4L3.4 2z" fill="none" stroke="#50423a" stroke-width="0.8" stroke-linejoin="round"/></svg>
<svg class="a" style="left:856.5px;top:62.5px;" width="8.6" height="9" viewBox="0 0 8.6 9"><path d="M0.8 0.8L7.8 8.2V0.8L0.8 8.2z" fill="#fff" stroke="#222" stroke-width="1.1" stroke-linejoin="round"/></svg>
<svg class="a" style="left:850px;top:78.2px;" width="11" height="13.5" viewBox="0 0 11 13.5"><path d="M5.5 0.6L10.4 3V10.4L5.5 12.9L0.6 10.4V3z" fill="url(#gG)"/>
<path d="M0.6 3.4L5.5 5.8V12.9L0.6 10.4z" fill="#ee7c14"/><path d="M0.6 3.4L3.4 2L8.2 4.4L5.5 5.8z" fill="#f9a040"/><path d="M3.4 2L5.5 0.6L10.4 3L8.2 4.4z" fill="#f2f2f2"/><path d="M5.5 5.8L10.4 3V10.4L5.5 12.9z" fill="#8a8a8a"/><path d="M5.5 5.8L8.2 4.4V8L5.5 9.4z" fill="#d96a0a"/>
<path d="M5.5 0.6L10.4 3V10.4L5.5 12.9L0.6 10.4V3.4L3.4 2z" fill="none" stroke="#50423a" stroke-width="0.8" stroke-linejoin="round"/></svg>
<svg class="a" style="left:855.5px;top:82px;" width="10.5" height="10.5" viewBox="0 0 10.5 10.5"><path d="M5.2 0.6L7.2 2.8H6.2V4.2H7.6V3.2L9.8 5.2L7.6 7.2V6.2H6.2V7.6H7.2L5.2 9.8L3.2 7.6H4.2V6.2H2.8V7.2L0.6 5.2L2.8 3.2V4.2H4.2V2.8H3.2z" fill="#fff" stroke="#222" stroke-width="0.9"/></svg>
<svg class="a" style="left:850px;top:98px;" width="11" height="13.5" viewBox="0 0 11 13.5"><path d="M5.5 0.6L10.4 3V10.4L5.5 12.9L0.6 10.4V3z" fill="url(#gG)"/>
<path d="M0.6 3.4L5.5 5.8V12.9L0.6 10.4z" fill="#ee7c14"/><path d="M0.6 3.4L3.4 2L8.2 4.4L5.5 5.8z" fill="#f9a040"/><path d="M3.4 2L5.5 0.6L10.4 3L8.2 4.4z" fill="#f2f2f2"/><path d="M5.5 5.8L10.4 3V10.4L5.5 12.9z" fill="#8a8a8a"/><path d="M5.5 5.8L8.2 4.4V8L5.5 9.4z" fill="#d96a0a"/>
<path d="M5.5 0.6L10.4 3V10.4L5.5 12.9L0.6 10.4V3.4L3.4 2z" fill="none" stroke="#50423a" stroke-width="0.8" stroke-linejoin="round"/></svg>
<svg class="a" style="left:855px;top:101px;" width="11" height="11" viewBox="0 0 11 11"><g fill="#fff" stroke="#222" stroke-width="1.1"><circle cx="3.2" cy="3.2" r="2.3"/><circle cx="7.8" cy="3.2" r="2.3"/><circle cx="3.2" cy="7.8" r="2.3"/><circle cx="7.8" cy="7.8" r="2.3"/></g></svg>
<svg class="a" style="left:896px;top:57.5px;" width="29" height="28" viewBox="0 0 29 28"><g transform="rotate(-45 14.5 14)"><path d="M-2.5 11h34v6h-34z" fill="#fff" stroke="#484848" stroke-width="1.1"/>
<path d="M1.5 11v2.6M5 11v2.6M8.5 11v2.6M12 11v2.6M15.5 11v2.6M19 11v2.6M22.5 11v2.6M26 11v2.8" stroke="#3c3c3c" stroke-width="1.1"/></g></svg>
<svg class="a" style="left:342px;top:143.5px;" width="16" height="16" viewBox="0 0 16 16"><path d="M1.6 8.6L5.4 6.8L9.2 8.6V13L5.4 15L1.6 13z" fill="#ee7f1a"/><path d="M1.6 8.6L5.4 6.8L9.2 8.6L5.4 10.4z" fill="#f9a44a"/><path d="M5.4 10.4L9.2 8.6V13L5.4 15z" fill="#d96c0e"/>
<rect x="3.8" y="2" width="10.4" height="4.8" rx="2.4" transform="rotate(-30 9 4.4)" fill="#fff" stroke="#555" stroke-width="1"/><path d="M6 4l2.2 3.4" stroke="#777" stroke-width="0.7"/></svg>
<svg class="a" style="left:363px;top:144.5px;" width="16" height="15" viewBox="0 0 16 15"><g fill="none" stroke="#cfcfcf" stroke-width="1"><circle cx="4.4" cy="4.2" r="2.6"/><path d="M4.4 0v8.4M0.2 4.2h8.4"/>
<path d="M4.6 11.4a2.4 2.4 0 0 1 0.4-3.2L10.6 4.4a2.4 2.4 0 0 1 3.2 0.6a2.4 2.4 0 0 1-0.4 3.2L7.8 12a2.4 2.4 0 0 1-3.2-0.6z" fill="#fff"/><path d="M7.6 7.2l3 3.2"/></g></svg>
<svg class="a" style="left:386px;top:145px;" width="15" height="14" viewBox="0 0 15 14"><g fill="none" stroke="#cfcfcf" stroke-width="1"><ellipse cx="5.6" cy="1.6" rx="5" ry="1.2"/><path d="M0.6 1.8L4.4 7.4V10.4H6.8V7.4L10.6 1.8"/>
<path d="M10.2 7.6L8.4 9.4l1.8 1.8M8.6 9.4h3.2a1.8 1.8 0 0 1 0 3.8"/></g></svg>
<svg class="a" style="left:407px;top:144.5px;" width="15" height="15" viewBox="0 0 15 15"><g fill="none" stroke="#3a3a3a" stroke-width="1.1"><ellipse cx="5.2" cy="1.7" rx="4.6" ry="1.2"/><path d="M0.6 1.9L4 7V10.2H6.4"/><path d="M9.8 1.9L8.4 4"/></g>
<path d="M5.4 4.6h8.6v9.6H5.4z" fill="#fff" stroke="#3a3a3a" stroke-width="1.1"/><path d="M7 7h1.6M7 9.4h1.6M7 11.8h1.6" stroke="#3a3a3a" stroke-width="1.3"/><path d="M9.6 7h3M9.6 9.4h3M9.6 11.8h3" stroke="#666" stroke-width="0.9"/></svg>
<svg class="a" style="left:439px;top:144.5px;" width="15" height="14" viewBox="0 0 15 14"><g fill="none" stroke="#cfcfcf" stroke-width="1"><path d="M2.6 0.5H0.6V11.5H2.6M9.4 0.5H11.4V6"/><circle cx="6" cy="5.6" r="2.6"/><path d="M6 1.6v8M2 5.6h8"/>
<path d="M10.6 8L9 9.6l1.6 1.6M9.2 9.6h2.8a1.7 1.7 0 0 1 0 3.4"/></g></svg>
<svg class="a" style="left:460px;top:144.5px;" width="15" height="14.5" viewBox="0 0 15 14.5"><g fill="none" stroke="#cfcfcf" stroke-width="1"><path d="M0.6 0.6h3.4v3.4H0.6z"/><circle cx="10.6" cy="8.2" r="3.4"/><path d="M2.4 4v9.8h4.2" stroke-dasharray="1.4 1"/><path d="M2.6 12l5-5.4" /></g></svg>
<svg class="a" style="left:482px;top:144.5px;" width="16" height="15.5" viewBox="0 0 16 15.5"><g fill="#fff" stroke="#eaa45a" stroke-width="1.1" stroke-linejoin="round"><path d="M6.2 0.6L11.8 3V7.4L6 9.6L0.6 7.4V3z"/><path d="M0.6 3L6 5.2L11.8 3M6 5.2V9.6" fill="none"/></g>
<g fill="none" stroke="#2a3238" stroke-width="1.1"><circle cx="10.6" cy="10" r="2.9"/><path d="M10.6 5.6v9M6.2 10h9"/></g></svg>
<svg class="a" style="left:502.5px;top:145px;" width="17" height="15.5" viewBox="0 0 17 15.5"><path d="M0.7 0.7h9.3v8.6H0.7z" fill="#fff" stroke="#eaa45a" stroke-width="1.2"/>
<g fill="none" stroke="#1e2429" stroke-width="1.1"><circle cx="10" cy="9.2" r="3"/><path d="M10 3.8v11.2M5 9.2h11"/></g><circle cx="10" cy="9.2" r="1.6" fill="#333"/></svg>
<svg class="a" style="left:538.5px;top:144.5px;" width="15" height="14.5" viewBox="0 0 15 14.5"><path d="M7.4 0.6L14.2 3.8V10.4L7.4 13.8L0.6 10.4V3.8z" fill="#f4f4f4" stroke="#9a9a9a" stroke-width="1" stroke-linejoin="round"/>
<path d="M0.6 3.8L7.4 7V13.8M7.4 7L14.2 3.8" fill="none" stroke="#b4b4b4" stroke-width="0.9"/><path d="M7.4 7L14.2 3.8V10.4L7.4 13.8z" fill="#e1e1e1"/><path d="M6 5.4L14 9.6" stroke="#e2a060" stroke-width="1.4"/></svg>
<svg class="a" style="left:560px;top:144.5px;" width="14" height="14.5" viewBox="0 0 14 14.5"><path d="M6.8 0.6L13 3.8V10.4L6.8 13.8L0.6 10.4V3.8z" fill="#f1eeee" stroke="#b4aaaa" stroke-width="1" stroke-linejoin="round"/>
<path d="M0.6 3.8L6.8 7V13.8M6.8 7L13 3.8" fill="none" stroke="#bdb3b3" stroke-width="0.9"/><path d="M6.8 0.8V7.6L12.8 10.4M6.8 7.6L0.8 10.4" fill="none" stroke="#e9a08c" stroke-width="0.9"/><path d="M9 3v8" stroke="#d9d0d0" stroke-width="2"/></svg>
<svg class="a" style="left:582px;top:144.5px;" width="14" height="14" viewBox="0 0 14 14"><g fill="none" stroke="#3e4c58" stroke-width="1.2"><circle cx="6.7" cy="6.7" r="4.9"/><path d="M6.7 0.2v13M0.2 6.7h13"/></g><circle cx="6.7" cy="6.7" r="1.7" fill="#c98a4a"/></svg>
<svg class="a" style="left:602px;top:144px;" width="16" height="16" viewBox="0 0 16 16"><path d="M1.4 14.4L12.6 2.8" stroke="#3e4c58" stroke-width="1.15"/><circle cx="13" cy="2.4" r="2.1" fill="#d98a42"/></svg>
<svg class="a" style="left:624.5px;top:144px;" width="16" height="16" viewBox="0 0 16 16"><path d="M1.4 14.4L15 1.2" stroke="#3e4c58" stroke-width="1.15"/><circle cx="8.4" cy="7.5" r="2.1" fill="#d98a42"/></svg>
<svg class="a" style="left:646px;top:144.5px;" width="16" height="15" viewBox="0 0 16 15"><path d="M0.8 1h3.4a2.6 2.6 0 0 1 2.6 2.6V11a2.6 2.6 0 0 0 2.6 2.6H14.4" fill="none" stroke="#3e4c58" stroke-width="1.15"/><circle cx="6.8" cy="7" r="2.1" fill="#d98a42"/></svg>
<svg class="a" style="left:668px;top:144.5px;" width="16" height="15" viewBox="0 0 16 15"><path d="M2.5 7.6L4.8 2.4L9.5 12L13 5.6" fill="none" stroke="#3e4c58" stroke-width="1.15"/><circle cx="4.8" cy="2.4" r="1.9" fill="#d98a42"/><circle cx="2.5" cy="7.6" r="1.9" fill="#d98a42"/><circle cx="9.5" cy="12" r="1.9" fill="#d98a42"/><circle cx="13" cy="5.6" r="1.9" fill="#d98a42"/></svg>
<svg class="a" style="left:689px;top:144.5px;" width="16" height="15" viewBox="0 0 16 15"><path d="M2.4 12.6L5.2 8.2L10.6 5.2L13.2 1.8" fill="none" stroke="#c07a3a" stroke-width="1.3"/><circle cx="2.4" cy="12.6" r="1.9" fill="#d98a42"/><circle cx="5.2" cy="8.2" r="1.9" fill="#d98a42"/><circle cx="10.6" cy="5.2" r="1.9" fill="#d98a42"/><circle cx="13.2" cy="1.8" r="1.9" fill="#d98a42"/></svg>
<svg class="a" style="left:712px;top:144.5px;" width="15" height="15" viewBox="0 0 15 15"><path d="M6.8 0.6V14.2M0.6 9.4C2.4 6.4 4.4 5 6.8 5S11.2 6.4 13 9.4" fill="none" stroke="#55606a" stroke-width="1.3"/><circle cx="6.8" cy="4.6" r="1.7" fill="#d98a42"/></svg>
<svg class="a" style="left:732.5px;top:144px;" width="15" height="15" viewBox="0 0 15 15"><circle cx="7.2" cy="7.2" r="6.2" fill="none" stroke="#3e4c58" stroke-width="1.2"/><circle cx="7.2" cy="7.2" r="1.9" fill="#d98a42"/></svg>
<svg class="a" style="left:754.5px;top:134px;" width="16" height="16" viewBox="0 0 16 16"><circle cx="8" cy="8" r="5.3" fill="none" stroke="#c8762c" stroke-width="1.1"/><circle cx="8" cy="2.7" r="1.9" fill="#d98a42"/><circle cx="13.3" cy="8" r="1.9" fill="#d98a42"/><circle cx="8" cy="13.3" r="1.9" fill="#d98a42"/><circle cx="2.7" cy="8" r="1.9" fill="#d98a42"/></svg>
<svg class="a" style="left:755px;top:153.5px;" width="15" height="15" viewBox="0 0 15 15"><path d="M7.4 0.6V14M0.8 7.4H14" stroke="#3e4c58" stroke-width="1.2"/><circle cx="7.4" cy="7.4" r="1.9" fill="#d98a42"/></svg>
<svg class="a" style="left:777.5px;top:134.5px;" width="14" height="15" viewBox="0 0 14 15"><path d="M12.2 0.8C6.6 4.2 3 8.6 1.6 14" fill="none" stroke="#3e4c58" stroke-width="1.15"/><circle cx="3.4" cy="10.8" r="2" fill="#d98a42"/></svg>
<svg class="a" style="left:798.5px;top:135px;" width="15" height="14" viewBox="0 0 15 14"><path d="M3.6 2.4C7 0.4 11 0.8 14.2 3.4C13.6 7.4 11.8 10.8 8.8 13.4C6.2 11.8 3.4 11.2 0.8 11.4C2.6 8.6 3.4 5.6 3.6 2.4z" fill="#eee" stroke="#9a9a9a" stroke-width="1"/><path d="M2.6 8h4v4" fill="none" stroke="#aaa" stroke-width="0.8"/><circle cx="8.8" cy="5" r="2" fill="#d98a42"/></svg>
<svg class="a" style="left:778px;top:154.5px;" width="13" height="12.5" viewBox="0 0 13 12.5"><path d="M4.4 0.8C7 0.6 9.8 1.4 12.2 3.2C11.2 6.6 9.4 9.6 6.8 11.8C5 10 3 9 0.8 8.6C2.6 6.4 3.8 3.8 4.4 0.8z" fill="#f1f1f1" stroke="#9a9a9a" stroke-width="1"/><circle cx="7.2" cy="4.6" r="1.9" fill="#d98a42"/></svg>
<svg class="a" style="left:799px;top:156.5px;" width="14" height="9.5" viewBox="0 0 14 9.5"><path d="M0.8 5.2L6.6 0.8L13.4 4L7.6 8.8z" fill="#e6e6e6" stroke="#9a9a9a" stroke-width="1"/><path d="M3.6 3L10.4 6.6M9.8 2.4L4.2 6.8" stroke="#b0b0b0" stroke-width="0.7"/><circle cx="7.8" cy="4.8" r="1.9" fill="#d98a42"/></svg>
<svg class="a" style="left:832.5px;top:144.5px;" width="15" height="15" viewBox="0 0 15 15"><path d="M0.7 0.7h13.6v13.6H0.7z" fill="#fff" stroke="#444" stroke-width="1"/><path d="M0.7 2.6h13.6" stroke="#555" stroke-width="0.8"/><path d="M2.2 5h6v5h-6z" fill="#fde6cc" stroke="#e39a52" stroke-width="0.9"/><circle cx="10" cy="7.4" r="2.4" fill="#f5d2ae" stroke="#333" stroke-width="1"/><path d="M8.2 9.2L5 12.6" stroke="#333" stroke-width="1.3"/></svg>
<svg class="a" style="left:854.5px;top:144.5px;" width="15" height="15" viewBox="0 0 15 15"><path d="M0.7 0.7h13.6v13.6H0.7z" fill="#fff" stroke="#444" stroke-width="1"/><path d="M0.7 2.6h13.6" stroke="#555" stroke-width="0.8"/><path d="M3.4 8.4h8.2M5.2 6.6L3.2 8.4L5.2 10.2M9.8 6.6L11.8 8.4L9.8 10.2" fill="none" stroke="#555" stroke-width="0.9"/></svg>
<svg class="a" style="left:875.5px;top:144.5px;" width="15" height="15" viewBox="0 0 15 15"><path d="M0.7 0.7h13.6v13.6H0.7z" fill="#fff" stroke="#444" stroke-width="1"/><path d="M0.7 2.6h13.6" stroke="#555" stroke-width="0.8"/><path d="M10.6 6.2A3.6 3.6 0 1 0 11 9.6" fill="none" stroke="#444" stroke-width="1"/><path d="M8.4 6.4h2.8V3.6" fill="none" stroke="#444" stroke-width="1"/></svg>
<svg class="a" style="left:897.5px;top:134.5px;" width="15" height="14.5" viewBox="0 0 15 14.5"><path d="M7.4 0.6L14.4 3.6V9.8L7.4 13.8L0.6 9.8V3.6z" fill="#8c8c8c" stroke="#4a4a4a" stroke-width="1" stroke-linejoin="round"/>
<path d="M7.4 0.8L14.2 3.7L7.4 6.8L0.8 3.7z" fill="#a9a9a9"/><path d="M0.8 3.8L7.4 6.9V13.6L0.8 9.7z" fill="url(#gW)"/><path d="M7.4 6.9L14.2 3.8V9.7L7.4 13.6z" fill="#6e6e6e"/></svg>
<svg class="a" style="left:898px;top:154px;" width="15" height="14.5" viewBox="0 0 15 14.5"><path d="M5.6 0.6L10.8 2.8V7.4L5.6 10L0.6 7.4V2.8z" fill="#f0f0f0" stroke="#cfcfcf" stroke-width="1"/><path d="M0.6 2.8L5.6 5.2L10.8 2.8M5.6 5.2V10" fill="none" stroke="#cfcfcf" stroke-width="0.9"/>
<circle cx="10.4" cy="10.2" r="3.4" fill="#fff" stroke="#cfcfcf" stroke-width="1.4" stroke-dasharray="1.6 1"/><circle cx="10.4" cy="10.2" r="2.6" fill="#fff" stroke="#cfcfcf" stroke-width="0.9"/><circle cx="10.4" cy="10.2" r="0.9" fill="#cfcfcf"/></svg>
<svg class="a" style="left:919.5px;top:134.5px;" width="15" height="15" viewBox="0 0 15 15"><path d="M0.7 0.7h13.6v13.6H0.7z" fill="#fff" stroke="#444" stroke-width="1"/><path d="M0.7 2.6h13.6" stroke="#555" stroke-width="0.8"/>
<path d="M3 6.6V4.8h1.8M10.2 4.8H12v1.8M12 10.2V12h-1.8M4.8 12H3v-1.8" fill="none" stroke="#333" stroke-width="1.1"/><path d="M4 6l1.6 1.4M11 6L9.4 7.4M4 11l1.6-1.4M11 11L9.4 9.6" stroke="#555" stroke-width="0.8"/></svg>
<svg class="a" style="left:953px;top:134.5px;" width="16" height="15" viewBox="0 0 16 15"><path d="M8 0.6L15 3.6V10.4L8 14.2L1 10.4V3.6z" fill="#9a9a9a" stroke="#4a4a4a" stroke-width="1" stroke-linejoin="round"/>
<path d="M8 0.8L14.8 3.7L8 6.4L1.2 3.7z" fill="#cfcfcf"/><path d="M1.2 3.8C3 5.6 5.4 6.4 8 6.4S13 5.6 14.8 3.8V10.3L8 14L1.2 10.3z" fill="url(#gG)"/><path d="M4 5.6V12M12 5.6V12" stroke="#777" stroke-width="0.7"/></svg>
<svg class="a" style="left:920px;top:154.5px;" width="15" height="13.5" viewBox="0 0 15 13.5"><path d="M1 8.6C2 4 4.6 1.4 8.6 0.8V6.6L14.2 9.2V10.8L7.4 12.8L1 10.6z" fill="#7b7b7b" stroke="#444" stroke-width="1" stroke-linejoin="round"/>
<path d="M1.2 8.8L8 6.8L14 9.4L7.4 11.2z" fill="#b9b9b9"/><ellipse cx="7.4" cy="9.2" rx="2.6" ry="1" fill="#6a6a6a"/></svg>
<svg class="a" style="left:953.5px;top:154px;" width="16" height="15" viewBox="0 0 16 15"><path d="M0.8 5.8C3 2.2 5.6 0.8 8.4 0.8S12.4 2 13.4 3.4" fill="none" stroke="#333" stroke-width="1.1"/><path d="M0.8 5.8C2.4 8.2 4 9.4 5.6 9.8" fill="none" stroke="#333" stroke-width="1.1"/>
<circle cx="7" cy="5" r="3" fill="#444"/><path d="M6 4.4h5.4l3 2.6v7.4H6z" fill="#fff" stroke="#333" stroke-width="1.1"/><path d="M11.2 4.6V7h3" fill="none" stroke="#333" stroke-width="0.9"/>
<path d="M7.8 8.4h1.4M7.8 10.4h1.4M7.8 12.4h1.4" stroke="#333" stroke-width="1.2"/><path d="M10.2 8.4h2.6M10.2 10.4h2.6M10.2 12.4h2.6" stroke="#777" stroke-width="0.8"/></svg>
<svg class="a" style="left:10.5px;top:178px;" width="12" height="12" viewBox="0 0 12 12"><circle cx="6" cy="6" r="3.7" fill="none" stroke="#333" stroke-width="1.3"/><circle cx="6" cy="6" r="0.9" fill="#333"/><path d="M6 0.5v1.6M6 9.9v1.6M0.5 6h1.6M9.9 6h1.6M2.1 2.1l1.1 1.1M8.8 8.8l1.1 1.1M2.1 9.9l1.1-1.1M8.8 3.2l1.1-1.1" stroke="#333" stroke-width="1.3"/></svg>
<svg class="a" style="left:11px;top:216px;" width="16" height="21" viewBox="0 0 16 21"><path d="M0.6 6.8L9.3 1.2L14.9 4.2L6.3 9.8z" fill="#dedede"/>
<path d="M0.6 6.8L6.3 9.8V20.3L0.6 17.4z" fill="url(#gW)"/>
<path d="M6.3 9.8L14.9 4.2V9.8L10.9 12.4V17.6L6.3 20.3z" fill="#a9a9a9"/>
<path d="M0.6 6.8L9.3 1.2L14.9 4.2V9.8L10.9 12.4V17.6L6.3 20.3L0.6 17.4z" fill="none" stroke="#444" stroke-width="1.1" stroke-linejoin="round"/>
<path d="M0.6 6.8L6.3 9.8L14.9 4.2M6.3 9.8V20.3M4.95 4L10.6 7M0.6 12.1L6.3 15.1L10.9 12.4" fill="none" stroke="#5a5a5a" stroke-width="0.8"/></svg>
<svg class="a" style="left:8.5px;top:253px;" width="22" height="21.5" viewBox="0 0 22 21.5"><path d="M10 0.6L14.4 3V9.6L10 12L5.6 9.6V3z" fill="#f3f3f3" stroke="#555" stroke-width="0.8" stroke-linejoin="round"/><path d="M10 5.4L14.4 3V9.6L10 12z" fill="#b5b5b5"/><path d="M5.6 3L10 5.4L14.4 3M10 5.4V12" fill="none" stroke="#666" stroke-width="0.6"/>
<path d="M0.8 12L4.6 14V18.6L0.8 16.6z" fill="#f6f6f6" stroke="#555" stroke-width="0.8"/><path d="M4.6 14L8.6 12V16.6L4.6 18.6z" fill="#cfcfcf" stroke="#555" stroke-width="0.8"/>
<path d="M0.6 5.4L4.8 3.4L9 5.4V12.4L4.8 14.4L0.6 12.4z" fill="#ef7f16"/><path d="M0.6 5.4L4.8 3.4L9 5.4L4.8 7.4z" fill="#fbab55"/><path d="M4.8 7.4L9 5.4V12.4L4.8 14.4z" fill="#dd700c"/>
<path d="M9.2 9.4L20.6 20.2V9.4L9.2 20.2z" fill="#fff" stroke="#1e1e1e" stroke-width="1.2" stroke-linejoin="round"/></svg>
<div class="a" style="left:5px;top:280.5px;width:27px;height:39px;background:#fff;border:1px solid #c9c9c9;box-sizing:border-box;border-right:none;"></div>
<svg class="a" style="left:8.8px;top:290px;" width="21.0" height="19.5" viewBox="0 0 21 19.5"><path d="M0.8 11.6C1.4 6 4.8 1.8 9.4 0.8L11.4 1.6V9L20.2 13V15.2L10.6 18.8L0.8 14.4z" fill="#9c9c9c" stroke="#555" stroke-width="0.9" stroke-linejoin="round"/>
<path d="M9.4 0.8L11.4 1.6V9L9.4 9.8z" fill="#6f6f6f"/><path d="M0.8 11.6C1.4 6 4.8 1.8 9.4 0.8V9.8L2.6 12.4z" fill="#c4c4c4"/>
<path d="M2.6 12.4L9.4 9.8L11.4 9L20.2 13L10.6 16.6L0.8 11.8z" fill="#c4c4c4"/><path d="M0.8 11.8L10.6 16.6L20.2 13V15.2L10.6 18.8L0.8 14.4z" fill="#6f6f6f"/>
<ellipse cx="10.6" cy="13" rx="3.6" ry="1.6" fill="#ededed" stroke="#555" stroke-width="0.8"/><ellipse cx="10.6" cy="13.2" rx="1.8" ry="0.8" fill="#6f6f6f"/></svg>
<svg class="a" style="left:12px;top:326px;" width="15" height="21" viewBox="0 0 15 21"><path d="M4.4 3.4L10.6 0.8L14.2 2.2V15.6L8 19.8L4.4 18.4z" fill="#efefef" stroke="#3c3c3c" stroke-width="1" stroke-linejoin="round"/>
<path d="M0.8 5L4.4 3.4L8 5V19.8L4.4 18.2L0.8 19.6z" fill="#fafafa" stroke="#3c3c3c" stroke-width="1" stroke-linejoin="round"/><path d="M4.4 3.4V18.2M8 5L14.2 2.2M6.2 4.2L12.4 1.6" fill="none" stroke="#3c3c3c" stroke-width="0.8"/></svg>
<svg class="a" style="left:8px;top:372px;" width="22" height="22" viewBox="0 0 22 22"><defs><radialGradient id="gI" cx="0.35" cy="0.3" r="0.8"><stop offset="0" stop-color="#b5b5b5"/><stop offset="1" stop-color="#6a6a6a"/></radialGradient></defs>
<circle cx="7.8" cy="13.6" r="7.2" fill="url(#gI)" stroke="#5a5a5a" stroke-width="0.6"/><path d="M7.8 12.4v5" stroke="#f4f4f4" stroke-width="1.8"/><circle cx="7.8" cy="9.8" r="1.1" fill="#f4f4f4"/>
<path d="M10.6 4.2A8.2 8.2 0 0 1 17 10.6M11.4 1.4A11 11 0 0 1 19.8 9.8" fill="none" stroke="#9a9a9a" stroke-width="0.9"/></svg>
<svg class="a" style="left:8px;top:420px;" width="22" height="21" viewBox="0 0 22 21"><path d="M0.8 0.8h20.4v19.4H0.8z" fill="#f4f4f4" stroke="#4a4a4a" stroke-width="1.2"/><path d="M0.8 3.6h20.4" stroke="#4a4a4a" stroke-width="1"/><path d="M15 2.2h1M17.4 2.2h1" stroke="#777" stroke-width="0.9"/>
<circle cx="10.8" cy="11.8" r="6.4" fill="#2f9cba" stroke="#1d7a96" stroke-width="0.6"/><path d="M7 8.6c1.6-0.6 2.4 0.6 2 1.8s-1.6 1.4-1.8 2.8M12 7c0.6 1.4 2.2 0.8 2.8 2.2s-1 2.2-0.4 3.6M9.6 14.2c1 0.2 1.2 1.4 0.8 2.6" fill="none" stroke="#c9ecf4" stroke-width="1.2"/></svg>
<svg class="a" style="left:8px;top:466px;" width="22" height="22" viewBox="0 0 22 22"><circle cx="10.6" cy="10.6" r="9.6" fill="#e9e9e9" stroke="#444" stroke-width="1.2"/><path d="M10.6 4V11H5.4M10.6 1v2M10.6 18.2v2M1 10.6h2M18.2 10.6h2" fill="none" stroke="#444" stroke-width="1.1"/></svg>
<svg class="a" style="left:9.5px;top:503px;" width="19" height="21" viewBox="0 0 19 21"><defs><linearGradient id="gR" x1="0" y1="0" x2="0" y2="1"><stop offset="0" stop-color="#f03020"/><stop offset="0.25" stop-color="#f6e21c"/><stop offset="0.5" stop-color="#30d030"/><stop offset="0.75" stop-color="#20c8e8"/><stop offset="1" stop-color="#2030e0"/></linearGradient></defs>
<path d="M0.6 0.8h7.2v19H0.6z" fill="url(#gR)"/><path d="M9 4.6l1.6-0.8L17.6 18l-1.6 1z" fill="#111"/><path d="M8.4 2.6l2.2 1.2L9 4.8z" fill="#fff" stroke="#999" stroke-width="0.4"/></svg>
<svg class="a" style="left:8.5px;top:541px;" width="21" height="18" viewBox="0 0 21 18"><path d="M3.6 0.8h5.6v12H3.6z" fill="#4a8ad6"/><path d="M3.6 2.8l5.6 2M3.6 5.8l5.6 2M3.6 8.8l5.6 2" stroke="#2a5aa6" stroke-width="1"/><path d="M1 13h10.6l-1.6 2.6H2.6z" fill="#3a76c2"/><path d="M2.6 16.6h7.4" stroke="#d2b45a" stroke-width="1"/>
<path d="M9.6 3.2h10.2l-4.6 3.2h-5.6z" fill="#4a8ad6"/><path d="M11.4 5l1.4-1L19.6 15.6l-1.6 0.8z" fill="#111"/></svg>
<svg class="a" style="left:9.5px;top:576px;" width="20" height="20.5" viewBox="0 0 20 20.5"><path d="M0.7 3.8H5V0.8h4.4v3H19v16H0.7z" fill="#fbfbfb" stroke="#3c3c3c" stroke-width="1.1"/>
<path d="M4 16.6L14.6 6.4" stroke="#4a6a72" stroke-width="2.2"/><path d="M15.6 16.8L5.4 7" stroke="#6e7a7e" stroke-width="2"/><circle cx="15.2" cy="6.2" r="2.3" fill="none" stroke="#4a6a72" stroke-width="1.4"/><path d="M3.2 5.6l3 0.6 0.4 2.6" fill="none" stroke="#6e7a7e" stroke-width="1.5"/></svg>
<div class="a" style="left:43px;top:221px;width:7px;height:7px;background:#fff;border:1px solid #c4c4c4;box-sizing:border-box;"></div>
<div class="a" style="left:44.5px;top:224px;width:4.0px;height:1px;background:#333;"></div>
<div class="a" style="left:50px;top:224px;width:4px;height:1px;background:#d0d0d0;"></div>
<div class="a" style="left:46px;top:215px;width:1px;height:6px;background:#d0d0d0;"></div>
<svg class="a" style="left:54px;top:217.5px;" width="15" height="12" viewBox="0 0 15 12"><path d="M0.7 11V0.8H5L6.4 2.6H11.6V4.6" fill="none" stroke="#2a2a2a" stroke-width="1.1"/><path d="M0.7 11L3 4.6H14.2L12 11z" fill="#fff" stroke="#2a2a2a" stroke-width="1.1" stroke-linejoin="round"/></svg>
<div class="a" style="left:62px;top:232px;width:0;height:79px;border-left:1px dotted #bdbdbd;"></div>
<div class="a" style="left:63px;top:241px;width:8px;height:0;border-top:1px dotted #bdbdbd;"></div>
<svg class="a" style="left:71px;top:236.3px;" width="14" height="10" viewBox="0 0 14 10"><path d="M0.6 5C3 1.6 5 0.7 7 0.7S11 1.6 13.4 5C11 8.4 9 9.3 7 9.3S3 8.4 0.6 5z" fill="#fff" stroke="#333" stroke-width="1"/><circle cx="7" cy="5" r="2.9" fill="#3a3a3a"/></svg>
<div class="a" style="left:63px;top:258.5px;width:8px;height:0;border-top:1px dotted #bdbdbd;"></div>
<svg class="a" style="left:71px;top:253.8px;" width="14" height="10" viewBox="0 0 14 10"><path d="M0.6 5C3 1.6 5 0.7 7 0.7S11 1.6 13.4 5C11 8.4 9 9.3 7 9.3S3 8.4 0.6 5z" fill="#fff" stroke="#333" stroke-width="1"/><circle cx="7" cy="5" r="2.9" fill="#3a3a3a"/></svg>
<div class="a" style="left:63px;top:276px;width:8px;height:0;border-top:1px dotted #bdbdbd;"></div>
<svg class="a" style="left:71px;top:271.3px;" width="14" height="10" viewBox="0 0 14 10"><path d="M0.6 5C3 1.6 5 0.7 7 0.7S11 1.6 13.4 5C11 8.4 9 9.3 7 9.3S3 8.4 0.6 5z" fill="#fff" stroke="#333" stroke-width="1"/><circle cx="7" cy="5" r="2.9" fill="#3a3a3a"/></svg>
<div class="a" style="left:63px;top:293.5px;width:8px;height:0;border-top:1px dotted #bdbdbd;"></div>
<svg class="a" style="left:71px;top:288.8px;" width="14" height="10" viewBox="0 0 14 10"><path d="M0.6 5C3 1.6 5 0.7 7 0.7S11 1.6 13.4 5C11 8.4 9 9.3 7 9.3S3 8.4 0.6 5z" fill="#fff" stroke="#333" stroke-width="1"/><circle cx="7" cy="5" r="2.9" fill="#3a3a3a"/></svg>
<svg class="a" style="left:85.5px;top:234px;" width="14" height="14" viewBox="0 0 14 14"><g fill="none" stroke="#e0708e" stroke-width="1.1"><circle cx="7" cy="8.4" r="3.4"/><path d="M7 0.6V8.4L1 12.6M7 8.4L13 12.6"/><path d="M5.6 2.6L7 0.6L8.4 2.6M1 10.6v2h2M13 10.6v2h-2"/></g></svg>
<svg class="a" style="left:85.5px;top:253.5px;" width="14" height="10" viewBox="0 0 14 10"><path d="M0.8 5L7 0.8 13.2 5 7 9.2z" fill="#f8c9d8" stroke="#e389a8" stroke-width="1"/></svg>
<svg class="a" style="left:85.5px;top:268.5px;" width="14" height="15" viewBox="0 0 14 15"><g fill="none" stroke="#35a6c4" stroke-width="1.1"><path d="M0.6 6.6C3.4 3 7.4 1 12.6 0.7"/><path d="M2.8 1.4V12H8"/><circle cx="7.4" cy="6.8" r="2.6"/></g>
<path d="M5.2 14l0.8-2.6 6-5.6 1.8 1.8-6 5.6z" fill="#f3d250" stroke="#2a2a2a" stroke-width="0.9"/><path d="M5.2 14l0.8-2.6 1.8 1.8z" fill="#333"/></svg>
<svg class="a" style="left:85.5px;top:287px;" width="14.5" height="13" viewBox="0 0 14.5 13"><path d="M7.2 0.6L13.9 4.2V9.6L10.4 12.2L7.3 9.6L4.2 12.2L0.6 9.6V4.2z" fill="url(#gW)" stroke="#3a3a3a" stroke-width="1" stroke-linejoin="round"/>
<path d="M7.2 0.8L13.7 4.3L10.4 6.6L7.3 4.6L4.2 6.6L0.8 4.3z" fill="#93dbee" stroke="#4aa8c4" stroke-width="0.6"/><path d="M4.2 6.6V12M10.4 6.6V12M7.3 4.6V9.6" stroke="#3a3a3a" stroke-width="0.7"/></svg>
<div class="a" style="left:63px;top:303px;width:40px;height:8px;overflow:hidden;">
<svg class="a" style="left:8px;top:3px" width="14" height="10"><path d="M0.6 5C3 1.6 5 0.7 7 0.7S11 1.6 13.4 5" fill="#fff" stroke="#333" stroke-width="1"/><circle cx="7" cy="5" r="2.9" fill="#3a3a3a"/></svg>
<svg class="a" style="left:22.5px;top:0.5px" width="14" height="15"><g fill="none" stroke="#35a6c4" stroke-width="1.1"><path d="M0.6 6.6C3.4 3 7.4 1 12.6 0.7"/><path d="M2.8 1.4V12H8"/><circle cx="7.4" cy="6.8" r="2.6"/></g></svg>
</div>
<svg class="a" style="left:244px;top:359px;" width="21" height="21" viewBox="0 0 21 21"><circle cx="14" cy="7" r="5.8" fill="none" stroke="#555" stroke-width="1.05"/><path d="M10 11L2 18.8M9 10.4L1.4 18" stroke="#555" stroke-width="0.9"/></svg>
<svg class="a" style="left:245px;top:391px;" width="19" height="17" viewBox="0 0 19 17"><path d="M0.7 5h9V0.9L18 8.4 9.7 15.9V11.8h-9z" fill="none" stroke="#d2d2d2" stroke-width="1.1" stroke-linejoin="round"/></svg>
<svg class="a" style="left:245px;top:420.5px;" width="19" height="17" viewBox="0 0 19 17"><path d="M18.3 5h-9V0.9L1 8.4 9.3 15.9V11.8h9z" fill="none" stroke="#4a4a4a" stroke-width="1" stroke-linejoin="round"/></svg>
<svg class="a" style="left:244.5px;top:447.5px;" width="21" height="21" viewBox="0 0 21 21"><g fill="none" stroke="#d2d2d2" stroke-width="1.1"><path d="M0.6 0.6h11v11H0.6z"/><path d="M6 3v6M3 6h6"/><path d="M12.6 12.6L19.6 19.6M19.8 14.6v5.2h-5.2"/></g></svg>
<svg class="a" style="left:303px;top:173.5px;" width="14" height="14" viewBox="0 0 14 14"><path d="M0.8 7.4L7 0.8L13.2 7.4M2.4 6.2V13H5.6V9.4H8.4V13H11.6V6.2" fill="#fff" stroke="#3a3a3a" stroke-width="1.1" stroke-linejoin="round"/><path d="M2.6 1.2v2.4" stroke="#3a3a3a" stroke-width="1"/></svg>
<svg class="a" style="left:452.3px;top:175px;" width="13.0" height="12.1" viewBox="0 0 21 19.5"><path d="M0.8 11.6C1.4 6 4.8 1.8 9.4 0.8L11.4 1.6V9L20.2 13V15.2L10.6 18.8L0.8 14.4z" fill="#a8a8a8" stroke="#666" stroke-width="0.9" stroke-linejoin="round"/>
<path d="M9.4 0.8L11.4 1.6V9L9.4 9.8z" fill="#7a7a7a"/><path d="M0.8 11.6C1.4 6 4.8 1.8 9.4 0.8V9.8L2.6 12.4z" fill="#d4d4d4"/>
<path d="M2.6 12.4L9.4 9.8L11.4 9L20.2 13L10.6 16.6L0.8 11.8z" fill="#d4d4d4"/><path d="M0.8 11.8L10.6 16.6L20.2 13V15.2L10.6 18.8L0.8 14.4z" fill="#7a7a7a"/>
<ellipse cx="10.6" cy="13" rx="3.6" ry="1.6" fill="#ededed" stroke="#666" stroke-width="0.8"/><ellipse cx="10.6" cy="13.2" rx="1.8" ry="0.8" fill="#7a7a7a"/></svg>
<svg class="a" style="left:523px;top:176px;" width="9" height="10" viewBox="0 0 9 10"><path d="M4.6 0.8H0.8V9H7.4V6" fill="none" stroke="#e6f3f8" stroke-width="1.4"/><path d="M4 5.2L7.8 1.2M5.2 0.8H8.2V3.8" fill="none" stroke="#e6f3f8" stroke-width="1.3"/></svg>
<svg class="a" style="left:536.5px;top:177px;" width="8" height="8" viewBox="0 0 8 8"><path d="M0.9 0.9L7.1 7.1M7.1 0.9L0.9 7.1" stroke="#fff" stroke-width="1.9"/></svg>
<svg class="a" style="left:941.5px;top:661.5px;" width="13" height="15" viewBox="0 0 13 15"><path d="M1.2 0.6V14.4" stroke="#9a9a9a" stroke-width="1.2"/><path d="M1.8 1.4h10.6v8.2H1.8z" fill="#f0f0f0" stroke="#b0b0b0" stroke-width="0.6"/><path d="M1.8 1.4h2.6v2H1.8zM7 1.4h2.8v2H7zM4.4 3.4H7v2H4.4zM9.8 3.4h2.6v2H9.8zM1.8 5.4h2.6v2H1.8zM7 5.4h2.8v2H7zM4.4 7.4H7v2.2H4.4zM9.8 7.4h2.6v2.2H9.8z" fill="#9c9c9c"/></svg>
<svg class="a" style="left:958.5px;top:662.5px;" width="15" height="14" viewBox="0 0 15 14"><path d="M0.6 4v-3.4h3.6M10.8 0.6h3.6v3.4M14.4 10v3.4h-3.6M4.2 13.4h-3.6v-3.4" fill="none" stroke="#666" stroke-width="1.05"/></svg>
<svg class="a" style="left:0;top:0" width="1024" height="686" viewBox="0 0 1024 686"><defs><linearGradient id="gH" x1="0" y1="0" x2="1" y2="0"><stop offset="0" stop-color="#74848a"/><stop offset="0.6" stop-color="#8d9b9f"/><stop offset="1" stop-color="#7b8a8e"/></linearGradient></defs>
<path d="M545.9 575.6L585.8 526.2L753.8 535.6L717.5 584.8z" fill="#f8e0e9" stroke="#d36b93" stroke-width="1.4" stroke-linejoin="round"/>
<g>
<path d="M587.8 358L590.6 556A59.2 17.3 2 0 0 708.7 558.4L706 356.4z" fill="url(#gC)"/>
<path d="M590.6 556A59.2 17.3 2 0 0 708.7 558.4" fill="none" stroke="#5462d4" stroke-width="2"/>
<ellipse cx="646.8" cy="357.8" rx="59.2" ry="17.3" fill="#b4c1c3" stroke="#4d585b" stroke-width="0.9" transform="rotate(-0.6 646.8 357.8)"/>
<ellipse cx="647.3" cy="358.15" rx="50.4" ry="14.85" fill="#4c5cc4"/>
<ellipse cx="647.3" cy="358.2" rx="49" ry="13.9" fill="none" stroke="#7f8de4" stroke-width="0.7"/>
<ellipse cx="647.3" cy="358.3" rx="46.8" ry="12.2" fill="#c4cbf0"/>
<ellipse cx="647.3" cy="358.4" rx="46" ry="11.6" fill="url(#gH)"/>
<path d="M587.8 358L590.6 556M706 356.4L708.7 558.4" stroke="#5c686b" stroke-width="0.8" fill="none"/>
</g>
<g fill="none" stroke="#d9dcdc" stroke-width="1">
<path d="M650.7 490V556.2H684.7V523L650.7 520.6L642 530.5V567.5L680 568.4L684.7 556.8"/>
<path d="M642 567.5L650.7 556.2M684.7 556.2L710 558M650.7 556.2L636 572"/>
</g>
<path d="M650.7 486l-2.2 7h4.4z" fill="#c9cccc"/>
<path d="M717 557.8l-9-3.2 1 6z" fill="#9a4f48"/>
<path d="M633.5 575.5l6.6-6 2.4 3.6z" fill="#a86058"/>
<text x="644.3" y="485.5" font-size="11" fill="#a4a8a8" font-family="Liberation Sans, sans-serif">Z</text>
<text x="721.5" y="564" font-size="11" fill="#9a9a9a" font-family="Liberation Sans, sans-serif">Y</text>
<text x="628" y="582" font-size="9.5" fill="#c05a5a" font-family="Liberation Sans, sans-serif">X</text>
<!-- triad -->
<g>
<path d="M335.4 604L339.4 600.2H356V616.4L351.6 620.4H335.4z" fill="#d9d9d9" fill-opacity="0.85" stroke="#bdbdbd" stroke-width="0.8"/>
<path d="M335.4 604H351.6V620.4M351.6 604L356 600.2" fill="none" stroke="#bdbdbd" stroke-width="0.8"/>
<path d="M339.3 610V594" stroke="#2a4db8" stroke-width="1.8"/><path d="M339.3 589.6l-2.4 6h4.8z" fill="#2a4db8"/>
<path d="M351.5 616.6H362" stroke="#2e8b3e" stroke-width="1.6"/><path d="M366.4 616.6l-6-2.2v4.4z" fill="#2e8b3e"/>
<circle cx="335" cy="621.4" r="1.4" fill="#c04848"/>
<text x="335.6" y="588.6" font-size="10.5" fill="#2a4db8" font-family="Liberation Sans, sans-serif">Z</text>
<text x="367.4" y="620.4" font-size="10.5" fill="#2e8b3e" font-family="Liberation Sans, sans-serif">Y</text>
<text x="328.4" y="628.4" font-size="9.5" fill="#c04848" font-family="Liberation Sans, sans-serif">X</text>
</g>
</svg>
</div>
</body></html>
